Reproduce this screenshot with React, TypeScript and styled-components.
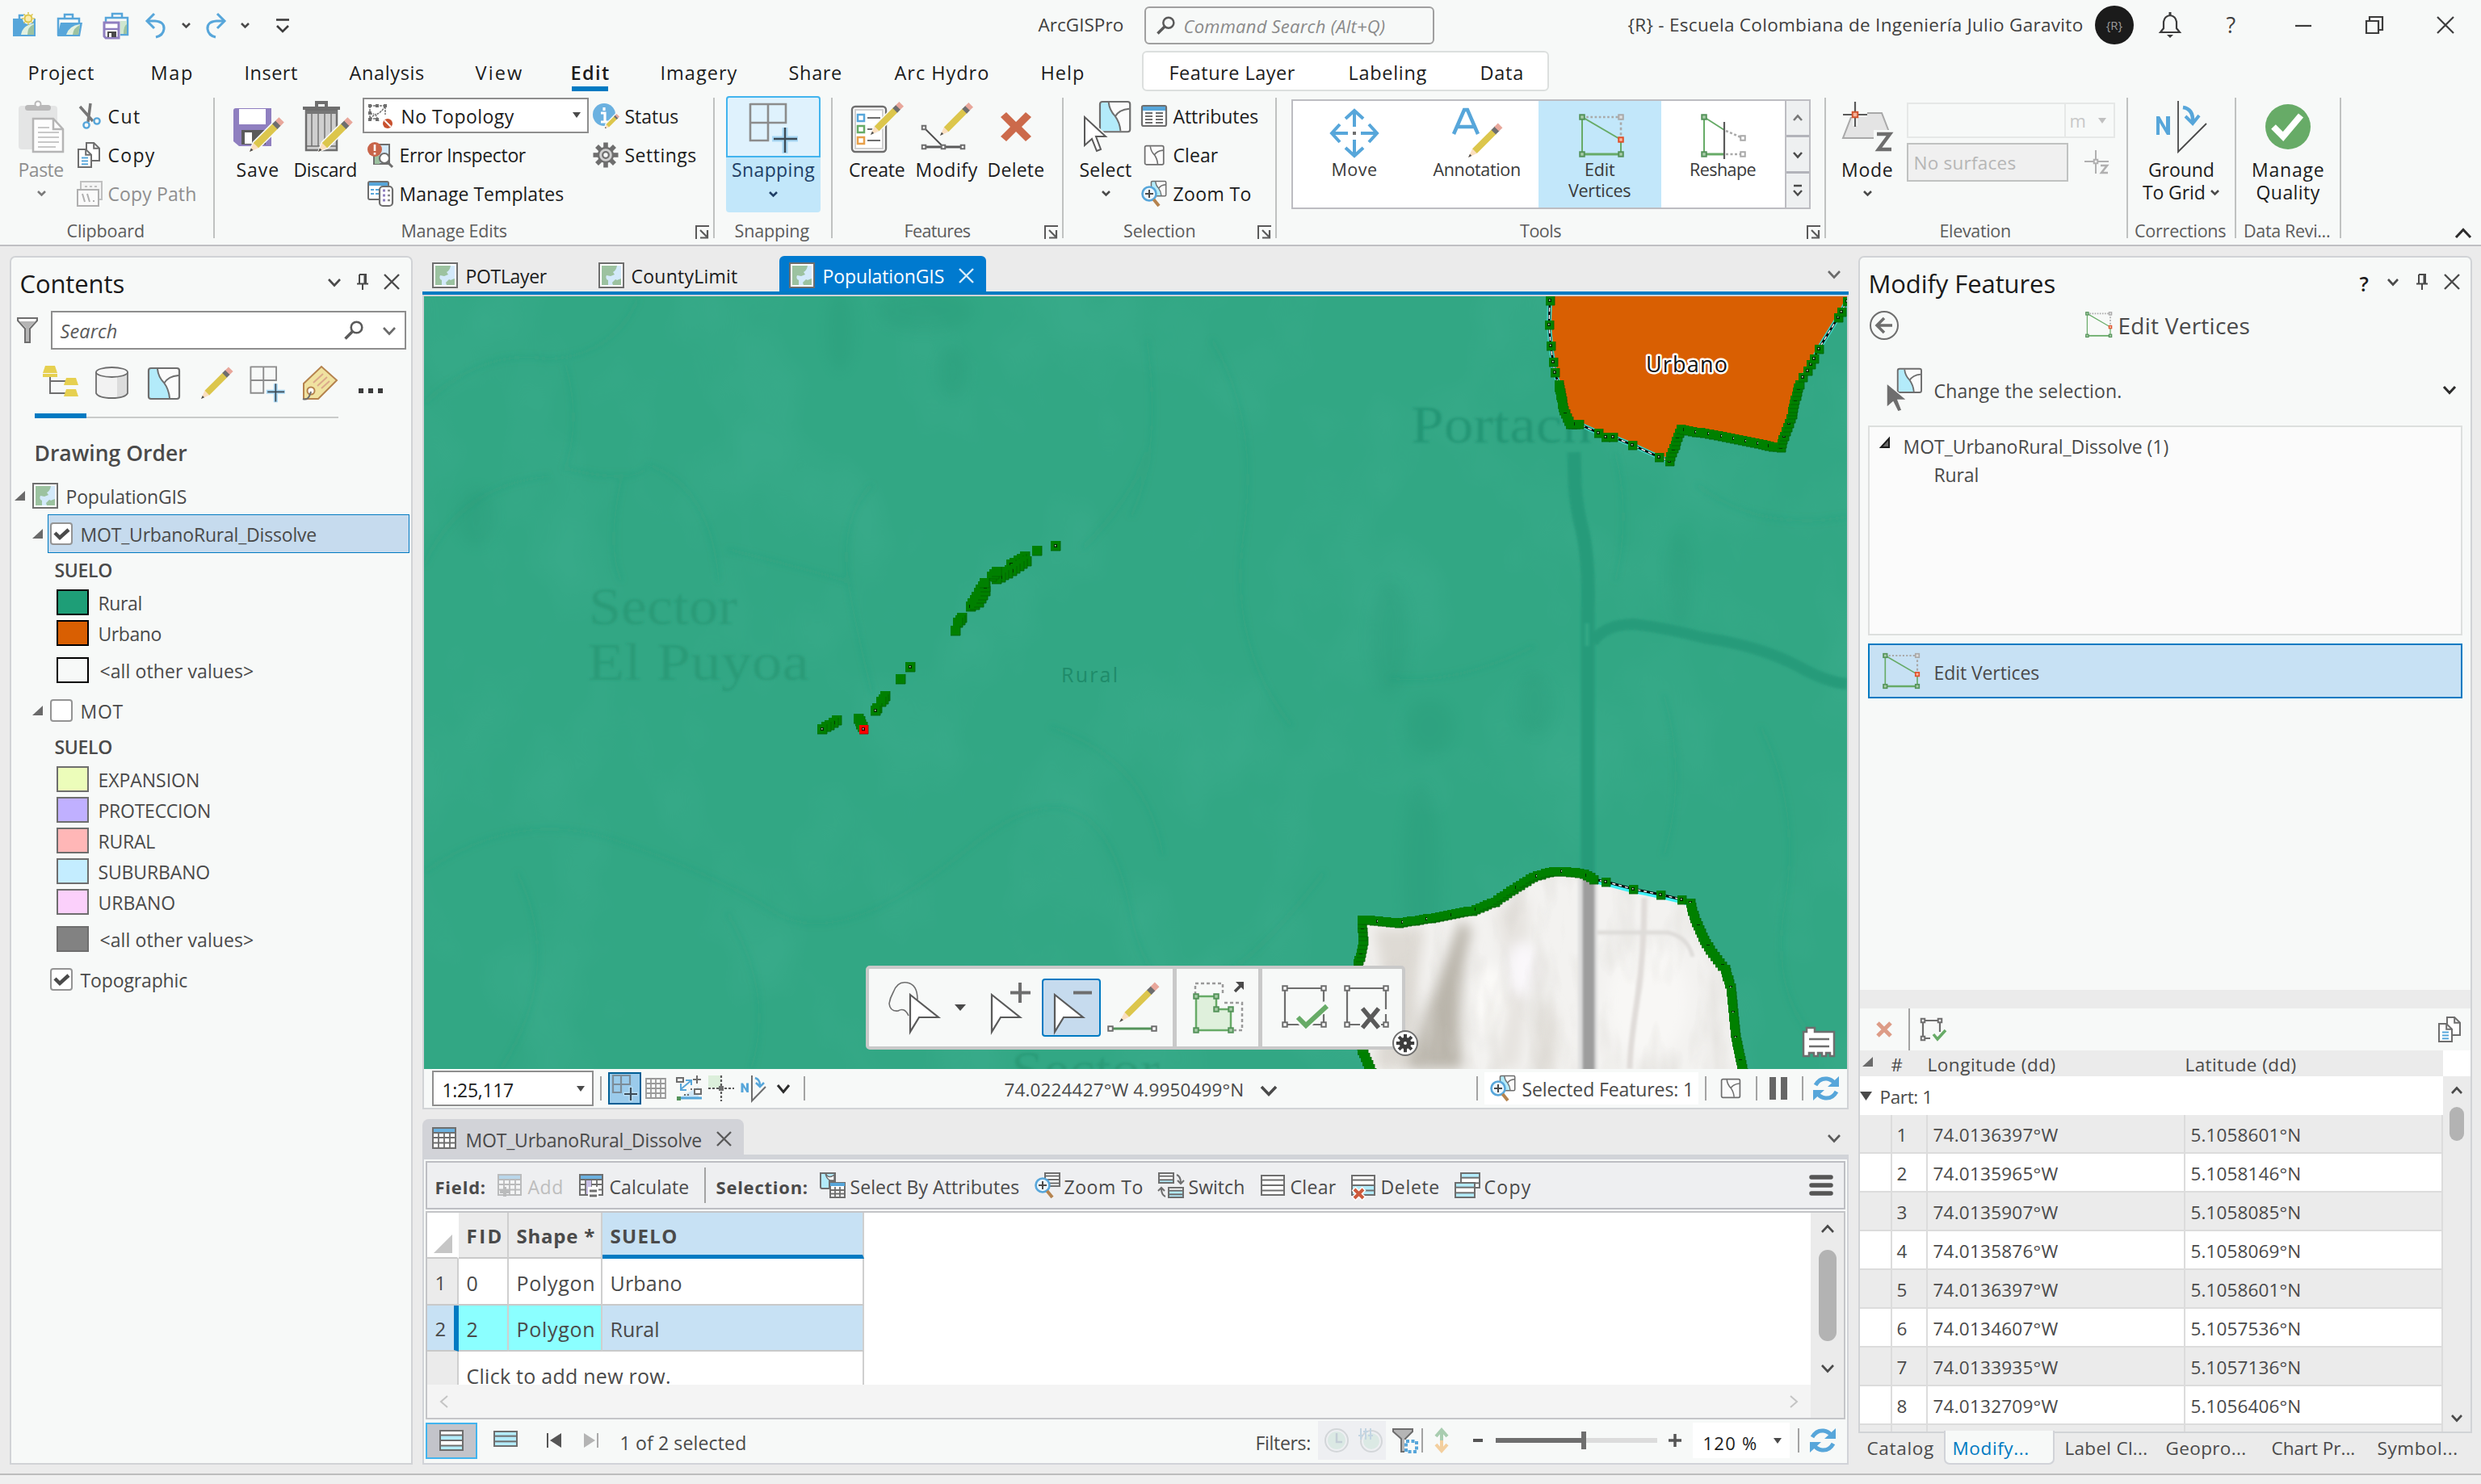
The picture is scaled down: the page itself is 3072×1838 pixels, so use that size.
import React, { useLayoutEffect, useRef, ReactNode } from "react";
import styled, { createGlobalStyle, css } from "styled-components";

const Global = createGlobalStyle`
  * { box-sizing: border-box; }
  html, body { margin: 0; padding: 0; }
  body { background: #ebebeb; overflow: hidden; }
  #root { font-family: "Open Sans", "Noto Sans", sans-serif; color: #4a4a4a; }
`;

/* ---------- text ---------- */

interface TextProps {
  $w?: number;
  $s?: number;
  $c?: string;
  $b?: number;
  $i?: boolean;
  $ml?: number;
  $lh?: number;
}

const TextBox = styled.span<TextProps>`
  display: block;
  flex: none;
  white-space: pre;
  text-indent: -1.5px;
  ${(p) => p.$w && css`width: ${p.$w}px;`}
  font-size: ${(p) => p.$s ?? 23}px;
  line-height: ${(p) => p.$lh ?? 28}px;
  color: ${(p) => p.$c ?? "inherit"};
  font-weight: ${(p) => p.$b ?? 400};
  font-style: ${(p) => (p.$i ? "italic" : "normal")};
  margin-left: ${(p) => p.$ml ?? 0}px;
`;

interface LabelProps {
  t: string;
  w?: number;
  s?: number;
  c?: string;
  b?: number;
  i?: boolean;
  ml?: number;
  lh?: number;
}

/* Text whose tracking is adjusted so that it fills its given width. */
function Label({ t, w, s, c, b, i, ml, lh }: LabelProps) {
  const ref = useRef<HTMLSpanElement>(null);
  useLayoutEffect(() => {
    const el = ref.current;
    if (!el || !w) return;
    el.style.letterSpacing = "0px";
    const range = document.createRange();
    range.selectNodeContents(el);
    const natural = range.getBoundingClientRect().width;
    const side = (s ?? 23) * 0.12;
    el.style.letterSpacing = `${(w + side - natural) / Math.max(1, t.length - 1)}px`;
  }, [t, w, s, b, i]);
  return (
    <TextBox ref={ref} $w={w} $s={s} $c={c} $b={b} $i={i} $ml={ml} $lh={lh}>
      {t}
    </TextBox>
  );
}

/* ---------- generic icon frame ---------- */

const Svg = styled.svg<{ $w: number; $h: number; $ml?: number; $mt?: number }>`
  display: block;
  flex: none;
  overflow: visible;
  width: ${(p) => p.$w}px;
  height: ${(p) => p.$h}px;
  margin-left: ${(p) => p.$ml ?? 0}px;
  margin-top: ${(p) => p.$mt ?? 0}px;
`;

interface IconProps {
  w?: number;
  h?: number;
  vb?: string;
  ml?: number;
  mt?: number;
  children?: ReactNode;
}
const Ic = ({ w = 32, h, vb, ml, mt, children }: IconProps) => (
  <Svg $w={w} $h={h ?? w} $ml={ml} $mt={mt} viewBox={vb ?? `0 0 ${w} ${h ?? w}`} fill="none">
    {children}
  </Svg>
);

const G = "#6e6e6e";
const BL = "#57a6da";

const Caret = ({ w = 11, h = 6, ml, mt, c = "#4a4a4a", sw = 2.6, dir = "down" }: any) => (
  <Ic w={w} h={h} ml={ml} mt={mt}>
    <path
      d={dir === "down" ? `M1 1L${w / 2} ${h - 0.5}L${w - 1} 1` : dir === "up" ? `M1 ${h - 1}L${w / 2} .5L${w - 1} ${h - 1}` : dir === "left" ? `M${w - 1} 1L1 ${h / 2}L${w - 1} ${h - 1}` : `M1 1L${w - 1} ${h / 2}L1 ${h - 1}`}
      stroke={c}
      strokeWidth={sw}
    />
  </Ic>
);
const Drop = ({ ml, c = "#4a4a4a", w = 10, h = 7, mt }: any) => (
  <Ic w={w} h={h} ml={ml} mt={mt}><path d={`M0 0H${w}L${w / 2} ${h}Z`} fill={c} /></Ic>
);
const Cross = ({ s = 20, ml, mt, c = "#4a4a4a", sw = 2.4 }: any) => (
  <Ic w={s} ml={ml} mt={mt}><path d={`M1 1L${s - 1} ${s - 1}M${s - 1} 1L1 ${s - 1}`} stroke={c} strokeWidth={sw} /></Ic>
);
const Pin = ({ ml }: any) => (
  <Ic w={14} h={20} ml={ml}>
    <path d="M3 1H11V12M3 1V12M0 12.5H14M7 13V20" stroke="#4a4a4a" strokeWidth="2" />
    <path d="M8.5 1H11V12H8.5Z" fill="#4a4a4a" />
  </Ic>
);
const Corner = ({ ml, mt }: any) => (
  <Ic w={13} h={12} ml={ml} mt={mt}><path d="M13 0V12H0Z" fill="#6a6a6a" /></Ic>
);

const Pencil = ({ x, y, len = 52, w = 8, a = 45, halo = true }: { x: number; y: number; len?: number; w?: number; a?: number; halo?: boolean }) => (
  <g transform={`translate(${x} ${y}) rotate(${a})`}>
    {halo && <path d={`M0 2L${-w / 2 - 1.5} ${-len * 0.2}V${-len - 1}H${w / 2 + 1.5}V${-len * 0.2}Z`} fill="#f7f9f8" />}
    <path d={`M0 0L${-w / 2} ${-len * 0.2}H${w / 2}Z`} fill="#fadfc0" />
    <path d={`M0 0L${-w / 5} ${-len * 0.08}H${w / 5}Z`} fill="#4a4a4a" />
    <rect x={-w / 2} y={-len * 0.8} width={w} height={len * 0.6} fill="#dcc64c" />
    <rect x={-w / 2} y={-len * 0.9} width={w} height={len * 0.11} fill={G} />
    <path d={`M${-w / 2} ${-len * 0.89}V${-len}H${w / 2}V${-len * 0.89}Z`} fill="#e8a79b" />
  </g>
);

const Node = ({ x, y, c = G, s = 6, f = "#fff" }: any) => (
  <rect x={x - s / 2 + 0.75} y={y - s / 2 + 0.75} width={s - 1.5} height={s - 1.5} stroke={c} strokeWidth="2" fill={f} />
);

const VerticesShape = () => (
  <g>
    <path d="M4 4H52" stroke="#a9a9a9" strokeWidth="2.6" strokeDasharray="2.6 2.6" />
    <path d="M52 4V32" stroke="#a9a9a9" strokeWidth="2.6" strokeDasharray="3.4 3" />
    <path d="M4 50V4L52 32V50" stroke="#67ab67" strokeWidth="2" />
    <path d="M4 50H52" stroke="#67ab67" strokeWidth="3" />
    <Node x={4} y={4} c="#54935a" s={7} f="#a9cda9" />
    <Node x={4} y={50} c="#54935a" s={7} f="#a9cda9" />
    <Node x={52} y={50} c="#54935a" s={7} f="#a9cda9" />
    <Node x={52} y={4} c="#a9a9a9" s={7} f="#ddd" />
    <Node x={52} y={32} c="#e0502a" s={7} f="#f8b8a0" />
  </g>
);

const MapPiece = ({ x = 0, y = 0, s = 1, blue = true }: any) => (
  <g transform={`translate(${x} ${y}) scale(${s})`}>
    <rect x="1" y="1" width="38" height="38" rx="3" fill="#fbfbfb" />
    {blue && <path d="M3 2H12Q13 12 20 19Q26 27 27 38H3Q2 38 2 36V3Z" fill="#b3ebfa" />}
    <path d="M12 2Q13 12 20 19Q26 27 27 38M20 20Q25 11 38 10" stroke={G} strokeWidth={2 / Math.sqrt(s)} />
    <rect x="1" y="1" width="38" height="38" rx="3" stroke={G} strokeWidth={2.2 / Math.sqrt(s)} />
  </g>
);

const PageLines = ({ x, y, w, h, c = G, lc = "#57a6da" }: any) => (
  <g transform={`translate(${x} ${y})`}>
    <path d={`M1 1H${w * 0.6}L${w} ${w * 0.45}V${h}H1Z`} fill="#fff" stroke={c} strokeWidth="2" />
    <path d={`M${w * 0.6} 1V${w * 0.45}H${w}`} stroke={c} strokeWidth="2" />
    {[0.5, 0.67, 0.84].map((k) => <path key={k} d={`M5 ${h * k}H${w - 4}`} stroke={lc} strokeWidth="2" />)}
  </g>
);

const CopyIcon = ({ w = 32, ml }: any) => (
  <Ic w={w} ml={ml} vb="0 0 32 32">
    <PageLines x={11} y={0} w={17} h={23} lc="none" />
    <PageLines x={1} y={8} w={17} h={23} />
  </Ic>
);

const SnapShape = () => (
  <g>
    <path d="M2 2H46V25H2M24 2V47H2V1" stroke="#8c8c8c" strokeWidth="2.6" />
    <path d="M45 31V63M29 45H61" stroke="#a9d8f5" strokeWidth="7" />
    <path d="M45 31V62M31 45H60" stroke="#3c4a55" strokeWidth="2.4" />
  </g>
);

const MapThumb = ({ ml }: any) => (
  <Ic w={32} ml={ml}>
    <rect x="1" y="1" width="30" height="30" fill="#fff" stroke="#6e6e6e" strokeWidth="2" />
    <rect x="4" y="4" width="24" height="24" fill="#9cc2a0" />
    <path d="M28 4H23Q22 10 18 12L20 15L15 17L10 16Q8 20 12 22V28H18Q20 22 28 20Z" fill="#d3e9fa" />
    <path d="M18 28L17 25L21 21L28 24V28Z" fill="#9cc2a0" />
  </Ic>
);

const ZoomMap = ({ ml }: any) => (
  <Ic w={32} ml={ml}>
    <MapPiece x={12} y={0} s={0.48} />
    <circle cx="10" cy="16" r="8.5" fill="#eef7fd" stroke={BL} strokeWidth="2.6" />
    <path d="M10 11V21M5 16H15" stroke="#4a4a4a" strokeWidth="2" />
    <path d="M15.500 23L22 31" stroke="#b5834e" strokeWidth="4" />
  </Ic>
);

const Sheet = ({ x, y, w, h, rows = 4, blue = [] as number[] }: any) => (
  <g transform={`translate(${x} ${y})`}>
    <rect x="1" y="1" width={w - 2} height={h - 2} fill="#fff" />
    {blue.map((b: number) => <rect key={b} x="1" y={(h * b) / rows} width={w - 2} height={h / rows} fill="#b3ebfa" />)}
    {Array.from({ length: rows - 1 }, (_, k) => <path key={k} d={`M1 ${(h * (k + 1)) / rows}H${w - 1}`} stroke={G} strokeWidth="2" />)}
    <rect x="1" y="1" width={w - 2} height={h - 2} stroke={G} strokeWidth="2" />
  </g>
);

const GridTable = ({ ml, children, o = 1 }: any) => (
  <Ic w={30} h={32} ml={ml}>
    <g opacity={o}>
      <rect x="1" y="3" width="28" height="25" fill="#fff" />
      <rect x="1" y="3" width="28" height="6" fill="#6bb1e0" />
      <path d="M1 9H29M1 15H29M1 21.5H29M8 9V28M15 9V28M22 9V28" stroke={G} strokeWidth="1.8" />
      <rect x="1" y="3" width="28" height="25" stroke={G} strokeWidth="2" />
      {children}
    </g>
  </Ic>
);

const Refresh = ({ ml }: any) => (
  <Ic w={32} ml={ml}>
    <path d="M3 12Q8 3 17 4Q23 5 26 9" stroke={BL} strokeWidth="5" />
    <path d="M32 1V14H18Z" fill={BL} />
    <path d="M29 20Q24 29 15 28Q9 27 6 23" stroke={BL} strokeWidth="5" />
    <path d="M0 31V18H14Z" fill={BL} />
  </Ic>
);

const GearShape = ({ c = G, f = "#d0d0d0", r = 11 }: any) => (
  <g transform="translate(16 16)">
    {[0, 45, 90, 135, 180, 225, 270, 315].map((a) => (
      <rect key={a} x="-2.800" y={-r - 4.500} width="5.600" height="7" transform={`rotate(${a})`} fill={c} />
    ))}
    <circle r={r - 2} fill={f} stroke={c} strokeWidth="2.4" />
    <circle r="3.800" fill="#f7f9f8" stroke={c} strokeWidth="2.200" />
  </g>
);

const GroundShape = () => (
  <g>
    <path d="M10 42V19H14L22 33V19H27V42H23L14 27V42Z" transform="translate(-9 0)" fill={BL} />
    <path d="M28 0V63L63 28" stroke="#4a4a4a" strokeWidth="1.800" />
    <path d="M34 8Q47 10 46 26" stroke={BL} strokeWidth="4.500" />
    <path d="M37 19L46 28L54 18" stroke={BL} strokeWidth="4" />
  </g>
);

const Lens = ({ ml, w = 24 }: any) => (
  <Ic w={w} ml={ml} vb="0 0 24 24">
    <circle cx="15.500" cy="8.500" r="6.800" stroke="#5a5a5a" strokeWidth="2.600" />
    <path d="M10.500 13.500L1.500 22.500" stroke="#5a5a5a" strokeWidth="3.600" />
  </Ic>
);

/* ---------- window and title bar ---------- */

const Window = styled.div`
  width: 3072px;
  height: 1838px;
  display: flex;
  flex-direction: column;
  background: #f7f9f8;
  overflow: hidden;
`;

const TitleBar = styled.header`
  height: 62px;
  flex: none;
  display: flex;
  align-items: center;
  padding-left: 14px;
  color: #3f3f3f;
`;

const SearchCommand = styled.div`
  margin-left: 27px;
  width: 359px;
  height: 47px;
  border: 2px solid #a0a0a0;
  border-radius: 6px;
  display: flex;
  align-items: center;
  padding-left: 13px;
  > span { padding-top: 2px; }
`;

const Avatar = styled.div`
  margin-left: 16px;
  width: 48px;
  height: 48px;
  border-radius: 50%;
  background: #1b1b1b;
  color: #9a9a9a;
  font-size: 15px;
  display: flex;
  align-items: center;
  justify-content: center;
`;

function Title() {
  return (
    <TitleBar>
      <Ic w={32}>
        <path d="M10 8V4H22V8" stroke={BL} strokeWidth="2.500" /><rect x="2" y="8" width="28" height="22" fill={BL} />
        <path d="M12 28Q14 16 28 14V28Z" fill="#e3f1e0" /><path d="M20 28Q20 18 28 15V28Z" fill="#9cc2a0" />
        <circle cx="21" cy="8" r="7" fill="#f7f9f8" /><circle cx="21" cy="8" r="4.500" fill="#fbedb0" stroke="#dcc64c" strokeWidth="2" />
        <path d="M21 0V16M13 8H29M15.500 2.500L26.500 13.500M26.500 2.500L15.500 13.500" stroke="#dcc64c" strokeWidth="1.500" strokeDasharray="2.500 11" />
      </Ic>
      <Ic w={32} ml={24}>
        <path d="M10 8V3H20V8" stroke={BL} strokeWidth="2.500" /><path d="M2 29V8H28V14" stroke={BL} strokeWidth="2.500" />
        <path d="M5 13H32L29 30H1Z" fill={BL} /><path d="M12 28Q15 17 29 15L27 28Z" fill="#e3f1e0" /><path d="M20 28Q21 19 29 16L27 28Z" fill="#9cc2a0" />
      </Ic>
      <Ic w={34} h={34} ml={25}>
        <path d="M12 8V3H24V8M4 14V8H31V29H22" stroke={BL} strokeWidth="2.500" /><path d="M22 12H30V28H22Z" fill="#cfe6cf" /><path d="M26 28Q26 18 30 16V28Z" fill="#9cc2a0" />
        <path d="M2 14H20V33H4L2 31Z" fill="#fff" stroke="#8f7fc0" strokeWidth="3" /><path d="M2 22H20" stroke="#8f7fc0" strokeWidth="2.500" /><path d="M6 25H17V32H6Z" fill="#4a4a4a" /><path d="M8 27H11V32H8Z" fill="#fff" />
      </Ic>
      <Ic w={30} ml={17}>
        <path d="M4 10H14Q26 11 25 20Q24 28 15 30" stroke={BL} strokeWidth="3" /><path d="M13 1L4 10L13 19" stroke={BL} strokeWidth="3" />
      </Ic>
      <Caret ml={17} />
      <Ic w={30} ml={16}>
        <path d="M26 10H16Q4 11 5 20Q6 28 15 30" stroke={BL} strokeWidth="3" /><path d="M17 1L26 10L17 19" stroke={BL} strokeWidth="3" />
      </Ic>
      <Caret ml={16} />
      <Ic w={16} h={18} ml={33} mt={2}><path d="M0 1.500H16" stroke="#3c3c3c" strokeWidth="2.600" /><path d="M1 9L8 16L15 9" stroke="#3c3c3c" strokeWidth="2.600" /></Ic>
      <Label t="ArcGISPro" w={103} s={22.5} ml={929} lh={36} />
      <SearchCommand>
        <Lens w={23} />
        <Label t="Command Search (Alt+Q)" w={247} s={22} ml={12} i c="#8a8a8a" />
      </SearchCommand>
      <Label t="{R} - Escuela Colombiana de Ingeniería Julio Garavito" w={561} s={22.5} ml={241} lh={36} />
      <Avatar>{"{R}"}</Avatar>
      <Ic w={28} h={32} ml={31}>
        <path d="M2 25H26L22 20V12Q21 5 14 4Q7 5 6 12V20Z" stroke="#3c3c3c" strokeWidth="2.200" /><path d="M14 0V4" stroke="#3c3c3c" strokeWidth="3" /><path d="M10 28H18L14 32Z" fill="#3c3c3c" />
      </Ic>
      <Label t="?" s={27} w={12} ml={57} lh={32} />
      <Ic w={20} h={20} ml={72}><path d="M0 11H20" stroke="#3c3c3c" strokeWidth="2.200" /></Ic>
      <Ic w={22} h={22} ml={67}><path d="M1 6H16V21H1ZM5 6V1H21V17H16" stroke="#3c3c3c" strokeWidth="2.200" /></Ic>
      <Cross s={22} ml={66} c="#3c3c3c" sw={2.200} />
    </TitleBar>
  );
}

/* ---------- ribbon tabs ---------- */

const TabStrip = styled.nav`
  height: 52px;
  flex: none;
  display: flex;
  padding-left: 36px;
  color: #1c1c1c;
`;
const RibbonTab = styled.div<{ $ml: number; $on?: boolean }>`
  height: 51px;
  margin-left: ${(p) => p.$ml}px;
  border-bottom: 6px solid ${(p) => (p.$on ? "#007ac2" : "transparent")};
`;
const ContextTabs = styled.div`
  margin-left: 73px;
  margin-top: 1px;
  width: 504px;
  height: 50px;
  background: #fff;
  border: 2px solid #dcdfde;
  border-radius: 6px;
  display: flex;
  padding-left: 33px;
  > span { margin-top: -3px; }
`;

function Tabs() {
  const tabs: [string, number, number][] = [
    ["Project", 0, 79], ["Map", 73, 49], ["Insert", 67, 63], ["Analysis", 67, 90], ["View", 66, 55], ["Edit", 63, 45],
    ["Imagery", 66, 92], ["Share", 67, 63], ["Arc Hydro", 68, 114], ["Help", 67, 51],
  ];
  return (
    <TabStrip>
      {tabs.map(([t, ml, w]) => (
        <RibbonTab key={t} $ml={ml} $on={t === "Edit"}>
          <Label t={t} w={w} s={23.5} lh={56} b={t === "Edit" ? 600 : 400} />
        </RibbonTab>
      ))}
      <ContextTabs>
        <Label t="Feature Layer" w={153} s={23.5} lh={56} />
        <Label t="Labeling" w={94} s={23.5} lh={56} ml={69} />
        <Label t="Data" w={51} s={23.5} lh={56} ml={69} />
      </ContextTabs>
    </TabStrip>
  );
}

/* ---------- ribbon ---------- */

const RibbonBar = styled.div`
  height: 191px;
  flex: none;
  display: flex;
  padding-top: 7px;
  border-bottom: 2px solid #bfbfc3;
`;
const GroupBox = styled.section<{ $w: number }>`
  width: ${(p) => p.$w}px;
  height: 174px;
  flex: none;
  border-right: 2px solid #c0c2c1;
  display: flex;
  flex-direction: column;
  color: #1c1c1c;
`;
const GroupBody = styled.div<{ $pl: number }>`
  height: 150px;
  display: flex;
  align-items: flex-start;
  padding-left: ${(p) => p.$pl}px;
`;
const GroupFoot = styled.div`
  height: 24px;
  display: flex;
  color: #5c5c5c;
`;
const FootLabel = styled.div`
  flex: 1;
  display: flex;
  justify-content: center;
  padding-right: 2px;
`;
const LaunchPad = styled.i`
  width: 5px;
  flex: none;
`;

const Group = ({ w, pl, name, nw, launch, children }: any) => (
  <GroupBox $w={w}>
    <GroupBody $pl={pl}>{children}</GroupBody>
    <GroupFoot>
      <FootLabel><Label t={name} w={nw} s={21.5} lh={30} /></FootLabel>
      {launch && (
        <Ic w={17} h={17} mt={8} vb="0 0 17 17">
          <path d="M1 17V1H17" stroke="#5a5a5a" strokeWidth="2" /><path d="M6 6L14 14M15 6V15.500H6" stroke="#5a5a5a" strokeWidth="2.200" />
        </Ic>
      )}
      {launch && <LaunchPad />}
    </GroupFoot>
  </GroupBox>
);

const BigButton = styled.div<{ $w: number; $off?: boolean; $ml?: number }>`
  width: ${(p) => p.$w}px;
  margin-left: ${(p) => p.$ml ?? 0}px;
  padding-top: 4px;
  display: flex;
  flex: none;
  flex-direction: column;
  align-items: center;
  color: ${(p) => (p.$off ? "#8f8f8f" : "#1c1c1c")};
`;
const BigText = styled.div`
  margin-top: 7px;
  display: flex;
  flex-direction: column;
  align-items: center;
`;
const TextLine = styled.div`
  display: flex;
  align-items: center;
`;

const SmallCol = styled.div<{ $ml: number }>`
  margin-left: ${(p) => p.$ml}px;
  display: flex;
  flex: none;
  flex-direction: column;
`;
const SmallButton = styled.div<{ $gap?: number; $pl?: number; $off?: boolean }>`
  height: 48px;
  display: flex;
  align-items: center;
  padding-left: ${(p) => p.$pl ?? 0}px;
  gap: ${(p) => p.$gap ?? 8}px;
  color: ${(p) => (p.$off ? "#8f8f8f" : "inherit")};
  > svg { margin-top: -3px; }
  > span { margin-top: -2px; }
`;
const TopologyCombo = styled.div`
  width: 280px;
  height: 44px;
  margin-bottom: 4px;
  background: #fff;
  border: 2px solid #8e8e8e;
  display: flex;
  align-items: center;
  padding-top: 2px;
  padding-left: 4px;
`;
const SnapToggle = styled.div`
  margin-top: -2px;
  width: 117px;
  height: 144px;
  border-radius: 4px;
  background: #c2e7fa;
  display: flex;
  flex-direction: column;
  align-items: center;
  color: #1f3f66;
`;
const SnapTop = styled.div`
  width: 117px;
  height: 76px;
  border: 2px solid #42b4ee;
  border-radius: 4px 4px 0 0;
  background: #dff2fd;
  display: flex;
  justify-content: center;
  padding-top: 6px;
`;
const Gallery = styled.div`
  margin-top: 2px;
  width: 643px;
  height: 136px;
  background: #fff;
  border: 2px solid #bdbdc2;
  display: flex;
`;
const GalleryCell = styled.div<{ $w: number; $on?: boolean }>`
  width: ${(p) => p.$w}px;
  height: 132px;
  background: ${(p) => (p.$on ? "#c2e7fa" : "transparent")};
  display: flex;
  flex-direction: column;
  align-items: center;
  padding-top: 8px;
  color: #3a3a3a;
`;
const GallerySteps = styled.div`
  width: 30px;
  height: 132px;
  border-left: 2px solid #bdbdc2;
  background: #eef0f1;
  display: flex;
  flex-direction: column;
`;
const GalleryStep = styled.div`
  flex: 1;
  display: flex;
  align-items: center;
  justify-content: center;
  & + & { border-top: 3px solid #b2b3ba; }
`;
const ElevationCol = styled.div`
  margin-left: 16px;
  margin-top: 6px;
  width: 258px;
`;
const HeightInput = styled.div`
  width: 258px;
  height: 44px;
  border: 2px solid #e6e8e7;
  display: flex;
`;
const UnitBox = styled.div`
  margin-left: 193px;
  width: 61px;
  border-left: 2px solid #e6e8e7;
  display: flex;
  align-items: center;
  padding-left: 6px;
`;
const SurfaceRow = styled.div`
  margin-top: 6px;
  display: flex;
  align-items: center;
`;
const SurfaceBox = styled.div`
  width: 200px;
  height: 48px;
  border: 2px solid #c0c2c1;
  background: #f0f0f0;
  padding: 9px 0 0 8px;
`;
const CollapseArea = styled.div`
  flex: 1;
  display: flex;
  align-items: flex-end;
  justify-content: flex-end;
  padding: 0 12px 8px 0;
`;

function Ribbon() {
  return (
    <RibbonBar>
      <Group w={266} pl={15} name="Clipboard" nw={94}>
        <BigButton $w={72} $off>
          <Ic w={64}>
            <rect x="4" y="6" width="48" height="54" rx="4" fill="#e4e5e5" /><rect x="12" y="5" width="32" height="7" rx="3.500" fill="#b9b9b9" /><circle cx="28" cy="4" r="3.500" fill="#fff" stroke="#b9b9b9" strokeWidth="2" />
            <path d="M22 22H47L59 35V63H22Z" fill="#fdfdfd" stroke="#b5b5b5" strokeWidth="2.500" /><path d="M47 22V35H59" stroke="#b5b5b5" strokeWidth="2.500" />
            <path d="M28 33H42M28 39H54M28 45H54M28 51H54M28 57H50" stroke="#c8c8c8" strokeWidth="2" />
          </Ic>
          <BigText><Label t="Paste" w={54} /></BigText>
          <Caret mt={12} c="#7a7a7a" />
        </BigButton>
        <SmallCol $ml={8}>
          <SmallButton>
            <Ic w={32}>
              <path d="M4 4L20 22M17 0L14 23" stroke="#777" strokeWidth="3.500" /><circle cx="12" cy="27" r="3.600" stroke={BL} strokeWidth="2.400" /><circle cx="25" cy="22" r="3.600" stroke={BL} strokeWidth="2.400" />
            </Ic>
            <Label t="Cut" w={37} />
          </SmallButton>
          <SmallButton><CopyIcon /><Label t="Copy" w={55} /></SmallButton>
          <SmallButton $off>
            <Ic w={32}>
              <rect x="5" y="1" width="26" height="22" fill="#f4f4f4" stroke="#c0c0c0" strokeWidth="2" /><path d="M10 7H26" stroke="#c0c0c0" strokeWidth="2" strokeDasharray="3 3" />
              <rect x="1" y="11" width="26" height="20" fill="#fafafa" stroke="#b0b0b0" strokeWidth="2" /><path d="M7 16L10 26M13 16L16 26M20 25H22" stroke="#b0b0b0" strokeWidth="2" />
            </Ic>
            <Label t="Copy Path" w={107} />
          </SmallButton>
        </SmallCol>
      </Group>

      <Group w={619} pl={17} name="Manage Edits" nw={129} launch>
        <BigButton $w={72}>
          <Ic w={64}>
            <path d="M2 12Q2 9 5 9H49V56H9L2 50Z" fill="#8f7fc0" /><rect x="9" y="10" width="33" height="19" fill="#fff" /><path d="M12 36H42V54H12Z" fill="#5a5a5a" /><rect x="16" y="39" width="9" height="14" fill="#fff" />
            <Pencil x={22} y={63} len={56} w={9} />
          </Ic>
          <BigText><Label t="Save" w={50} /></BigText>
        </BigButton>
        <BigButton $w={92} $ml={2}>
          <Ic w={64}>
            <path d="M21 7V2H33V7" stroke={G} strokeWidth="4" /><rect x="4" y="7" width="46" height="4" fill={G} />
            <rect x="8" y="12" width="38" height="49" fill="#cfcfcf" stroke={G} strokeWidth="2.500" /><rect x="8" y="12" width="38" height="4" fill="#777" />
            <path d="M15 16V56M23 16V56M31 16V56M39 16V56" stroke="#8a8a8a" strokeWidth="2" /><path d="M8 56H46" stroke={G} strokeWidth="1.500" />
            <Pencil x={23} y={63} len={56} w={9} />
          </Ic>
          <BigText><Label t="Discard" w={76} /></BigText>
        </BigButton>
        <SmallCol $ml={0}>
          <TopologyCombo>
            <Ic w={32}>
              <path d="M3 3H22V14M3 3V19L10 13M3 19H12M22 3Q17 12 10 14L14 22M3 13H8" stroke={G} strokeWidth="1.500" strokeDasharray="3 1" />
              {[[3, 3], [12, 3], [22, 3], [3, 12], [3, 20], [12, 20]].map(([x, y]) => <rect key={`${x}-${y}`} x={x - 2} y={y - 2} width="4" height="4" fill={G} />)}
              <circle cx="25" cy="25" r="6" fill="#c8502e" /><path d="M21 21L29 29" stroke="#fff" strokeWidth="2" />
            </Ic>
            <Label t="No Topology" w={137} ml={11} />
            <Drop ml={74} mt={-3} />
          </TopologyCombo>
          <SmallButton $pl={6} $gap={9}>
            <Ic w={32}>
              <rect x="8" y="3" width="19" height="24" fill="#d3e9fa" stroke={G} strokeWidth="2" /><path d="M9 27V14L17 18L15 27Z" fill="#9cc2a0" />
              <circle cx="9" cy="9" r="9" fill="#c8654a" /><path d="M9 3V11M9 13V15.500" stroke="#fff" strokeWidth="2.600" />
              <circle cx="21" cy="20" r="6" fill="#fff" stroke={G} strokeWidth="2.200" /><path d="M25 25L31 31" stroke={G} strokeWidth="3" />
            </Ic>
            <Label t="Error Inspector" w={154} />
          </SmallButton>
          <SmallButton $pl={6} $gap={9}>
            <Ic w={32}>
              <rect x="1" y="1" width="25" height="22" rx="2" fill="#fff" stroke={G} strokeWidth="2" /><rect x="2" y="2" width="23" height="4" fill="#57a6da" />
              <path d="M4 11H8M10 11H14M4 16H8M10 16H14" stroke={BL} strokeWidth="2" />
              <rect x="15" y="7" width="16" height="24" rx="4" fill="#fff" stroke={G} strokeWidth="2.200" /><path d="M19 12H22M19 18H22M19 24H22" stroke="#8f7fc0" strokeWidth="3" /><path d="M25 12H28M25 18H28M25 24H28" stroke="#8a8a8a" strokeWidth="2.500" />
            </Ic>
            <Label t="Manage Templates" w={201} />
          </SmallButton>
        </SmallCol>
        <SmallCol $ml={5}>
          <SmallButton $gap={9}>
            <Ic w={32}>
              <circle cx="14" cy="14" r="14" fill="#6bb1e0" /><path d="M14 5V9M10 12H15V23M10 23H19" stroke="#fff" strokeWidth="3.200" />
              <Pencil x={15} y={31} len={23} w={5} />
            </Ic>
            <Label t="Status" w={64} />
          </SmallButton>
          <SmallButton $gap={9}>
            <Ic w={32}><GearShape /></Ic>
            <Label t="Settings" w={86} />
          </SmallButton>
        </SmallCol>
      </Group>

      <Group w={146} pl={14} name="Snapping" nw={90}>
        <SnapToggle>
          <SnapTop><Ic w={64} ml={2}><SnapShape /></Ic></SnapTop>
          <TextLine><Label t="Snapping" w={100} lh={30} /></TextLine>
          <Caret mt={12} c="#1f3f66" />
        </SnapToggle>
      </Group>

      <Group w={286} pl={18} name="Features" nw={80} launch>
        <BigButton $w={74}>
          <Ic w={64}>
            <rect x="1" y="7" width="42" height="56" rx="4" fill="#fff" stroke={G} strokeWidth="2.400" /><rect x="5" y="11" width="34" height="48" fill="none" stroke="#cfcfcf" strokeWidth="2" />
            <rect x="8" y="17" width="8" height="8" stroke={BL} strokeWidth="2.500" /><rect x="8" y="31" width="8" height="8" stroke="#67ab67" strokeWidth="2.500" /><rect x="8" y="45" width="8" height="8" stroke="#e8a04a" strokeWidth="2.500" />
            <path d="M20 21H36M20 35H36M20 49H36" stroke={G} strokeWidth="2" /><Pencil x={24} y={42} len={54} w={8} />
          </Ic>
          <BigText><Label t="Create" w={67} /></BigText>
        </BigButton>
        <BigButton $w={84} $ml={7}>
          <Ic w={64}>
            <path d="M4 33L28 57" stroke="#4a4a4a" strokeWidth="1.800" /><path d="M4 57H52" stroke="#5a5a5a" strokeWidth="3" />
            <Node x={4} y={33} /><Node x={4} y={57} /><Node x={28} y={57} /><Node x={52} y={57} /><Pencil x={24} y={43} len={54} w={8} />
          </Ic>
          <BigText><Label t="Modify" w={74} /></BigText>
        </BigButton>
        <BigButton $w={76} $ml={6}>
          <Ic w={64}><path d="M13 20L20 14L32 26L44 14L51 20L39 32L51 44L44 50L32 38L20 50L13 44L25 32Z" fill="#cc6a4b" /></Ic>
          <BigText><Label t="Delete" w={68} /></BigText>
        </BigButton>
      </Group>

      <Group w={264} pl={19} name="Selection" nw={87} launch>
        <BigButton $w={66}>
          <Ic w={64}>
            <MapPiece x={24} y={0} s={0.98} />
            <path d="M6 20V55L15 47L21 62L26 60L20 44H32Z" fill="#fff" stroke="#f7f9f8" strokeWidth="5" />
            <path d="M6 20V55L15 47L21 62L26 60L20 44H32Z" fill="#fff" stroke="#5a5a5a" strokeWidth="2" />
          </Ic>
          <BigText><Label t="Select" w={62} /></BigText>
          <Caret mt={12} />
        </BigButton>
        <SmallCol $ml={11}>
          <SmallButton $gap={9}>
            <Ic w={32}>
              <rect x="1" y="3" width="30" height="25" rx="2" fill="#fff" stroke={G} strokeWidth="2.200" /><rect x="2" y="4" width="28" height="5" fill="#57a6da" />
              <path d="M5 12H14M5 16H14M5 20H14M5 24H14M18 12H27M18 16H27M18 20H27M18 24H27" stroke={G} strokeWidth="2" />
            </Ic>
            <Label t="Attributes" w={103} />
          </SmallButton>
          <SmallButton $gap={9}><Ic w={32}><MapPiece x={4} y={4} s={0.61} blue={false} /></Ic><Label t="Clear" w={53} /></SmallButton>
          <SmallButton $gap={9}><ZoomMap /><Label t="Zoom To" w={94} /></SmallButton>
        </SmallCol>
      </Group>

      <Group w={680} pl={18} name="Tools" nw={49} launch>
        <Gallery>
          <GalleryCell $w={152}>
            <Ic w={64}>
              {[0, 90, 180, 270].map((a) => (
                <g key={a} transform={`rotate(${a} 32 32)`}><path d="M32 24V5" stroke={BL} strokeWidth="4" /><path d="M21 14L32 4L43 14" stroke={BL} strokeWidth="4" /></g>
              ))}
              <rect x="30" y="30" width="4" height="4" fill={G} />
            </Ic>
            <Label t="Move" w={54} s={21.5} lh={26} />
          </GalleryCell>
          <GalleryCell $w={152}>
            <Ic w={64}>
              <path d="M3 33L16 3H20L33 33M8 24H28" stroke={BL} strokeWidth="4.500" /><Pencil x={21} y={62} len={56} w={8} halo={false} />
            </Ic>
            <Label t="Annotation" w={106} s={21.5} lh={26} />
          </GalleryCell>
          <GalleryCell $w={152} $on>
            <Ic w={64} h={64} vb="-6 -8 64 64"><VerticesShape /></Ic>
            <Label t="Edit" w={35} s={21.5} lh={26} />
            <Label t="Vertices" w={75} s={21.5} lh={26} />
          </GalleryCell>
          <GalleryCell $w={153}>
            <Ic w={64} h={64} vb="-4 -8 64 64">
              <path d="M4 50V4L29 20" stroke="#67ab67" strokeWidth="2" /><path d="M4 50H29" stroke="#67ab67" strokeWidth="3" />
              <path d="M29 10V56" stroke="#5a5a5a" strokeWidth="2.200" /><path d="M31 21L52 30M31 50H52" stroke="#a9a9a9" strokeWidth="2.600" strokeDasharray="3 2.500" />
              <Node x={4} y={4} c="#54935a" s={7} f="#a9cda9" /><Node x={4} y={50} c="#54935a" s={7} f="#a9cda9" /><Node x={52} y={30} c="#a9a9a9" s={7} /><Node x={52} y={50} c="#a9a9a9" s={7} />
            </Ic>
            <Label t="Reshape" w={80} s={21.5} lh={26} />
          </GalleryCell>
          <GallerySteps>
            <GalleryStep><Caret dir="up" w={12} h={7} c="#777" /></GalleryStep>
            <GalleryStep><Caret w={12} h={7} /></GalleryStep>
            <GalleryStep><Ic w={12} h={14}><path d="M1 1H11M1 7L6 12.500L11 7" stroke="#4a4a4a" strokeWidth="2.400" /></Ic></GalleryStep>
          </GallerySteps>
        </Gallery>
      </Group>

      <Group w={374} pl={18} name="Elevation" nw={86}>
        <BigButton $w={66}>
          <Ic w={64}>
            <path d="M14 15H50L62 46H2Z" fill="#e4e4e4" stroke="#a9a9a9" strokeWidth="2" />
            <path d="M17 2V31M2 17H32" stroke="#f7f9f8" strokeWidth="6" /><path d="M17 1V32M2 17H32" stroke="#5a5a5a" strokeWidth="2.200" /><Node x={17} y={17} c="#d0552f" s={8} f="#f5b59c" />
            <path d="M40 36H64V64H40Z" fill="#f7f9f8" /><path d="M44 41H60L46 60H62" stroke={G} strokeWidth="4.500" />
          </Ic>
          <BigText><Label t="Mode" w={61} /></BigText>
          <Caret mt={12} />
        </BigButton>
        <ElevationCol>
          <HeightInput><UnitBox><Label t="m" w={20} s={22} c="#c8c8c8" /><Drop ml={14} c="#c0c0c0" /></UnitBox></HeightInput>
          <SurfaceRow>
            <SurfaceBox><Label t="No surfaces" w={124} s={22.5} c="#b6b6b6" /></SurfaceBox>
            <Ic w={32} ml={20}>
              <path d="M14 1V30M0 15H30" stroke="#b0b0b0" strokeWidth="2" /><Node x={14} y={15} c="#b0b0b0" /><path d="M18 18H31V31H18Z" fill="#f7f9f8" /><path d="M20 20H28L21 29H29" stroke="#b0b0b0" strokeWidth="2.600" />
            </Ic>
          </SurfaceRow>
        </ElevationCol>
      </Group>

      <Group w={134} pl={17} name="Corrections" nw={111}>
        <BigButton $w={98}>
          <Ic w={64}><GroundShape /></Ic>
          <BigText>
            <Label t="Ground" w={79} />
            <TextLine><Label t="To Grid" w={75} /><Caret ml={7} /></TextLine>
          </BigText>
        </BigButton>
      </Group>

      <Group w={130} pl={10} name="Data Revi..." nw={105}>
        <BigButton $w={108}>
          <Ic w={64}><circle cx="32" cy="32" r="28" fill="#67ab67" /><path d="M14 32L26 44L48 18" stroke="#fff" strokeWidth="8" /></Ic>
          <BigText><Label t="Manage" w={87} /><Label t="Quality" w={76} /></BigText>
        </BigButton>
      </Group>
      <CollapseArea><Caret dir="up" w={20} h={11} c="#2c2c2c" sw={3} /></CollapseArea>
    </RibbonBar>
  );
}

/* ---------- work area ---------- */

const WorkArea = styled.main`
  height: 1520px;
  flex: none;
  display: flex;
  background: #ebebeb;
`;
const StatusEdge = styled.div`
  flex: 1;
  border-top: 2px solid #bcbcbc;
  background: #efefef;
`;

/* contents pane */

const Pane = styled.aside<{ $w: number; $h: number }>`
  margin: 12px 0 0 12px;
  width: ${(p) => p.$w}px;
  height: ${(p) => p.$h}px;
  flex: none;
  background: #f7f9f8;
  border: 2px solid #d1d3d6;
  border-radius: 7px 7px 0 0;
`;
const PaneHead = styled.div`
  height: 66px;
  display: flex;
  align-items: center;
  padding: 0 0 6px 12px;
  color: #1a1a1a;
  > span { padding-top: 4px; }
`;
const SearchRow = styled.div`
  display: flex;
  align-items: center;
  height: 48px;
  padding-left: 7px;
`;
const SearchField = styled.div`
  margin-left: 16px;
  width: 440px;
  height: 48px;
  border: 2px solid #8e8e8e;
  background: #fff;
  display: flex;
  align-items: center;
  padding-left: 11px;
  > span { padding-top: 2px; }
`;
const ModeRow = styled.div`
  height: 85px;
  display: flex;
  padding-left: 29px;
`;
const ModeTab = styled.div<{ $on?: boolean; $w?: number; $plain?: boolean }>`
  width: ${(p) => p.$w ?? 64}px;
  height: 85px;
  display: flex;
  justify-content: center;
  padding-top: 20px;
  ${(p) => !p.$plain && css`border-bottom: ${p.$on ? "6px solid #007ac2" : "2px solid #c9cbca"};`}
`;
const Heading = styled.div`
  height: 72px;
  padding: 25px 0 0 30px;
`;
const TreeRow = styled.div<{ $h: number; $mt?: number; $pl: number }>`
  height: ${(p) => p.$h}px;
  margin-top: ${(p) => p.$mt ?? 0}px;
  padding-left: ${(p) => p.$pl}px;
  display: flex;
  align-items: center;
  span { padding-top: 2px; }
`;
const TreeSelection = styled.div`
  margin-left: 6px;
  width: 448px;
  height: 48px;
  background: #c6dbee;
  border: 1px solid #007ac2;
  display: flex;
  align-items: center;
  padding-left: 2px;
`;
const CheckBox = styled.div<{ $ml?: number }>`
  margin-left: ${(p) => p.$ml ?? 0}px;
  width: 28px;
  height: 28px;
  flex: none;
  border: 2px solid #949494;
  border-radius: 4px;
  background: #fff;
  display: flex;
  align-items: center;
  justify-content: center;
`;
const Swatch = styled.div<{ $c: string; $line?: string }>`
  width: 40px;
  height: 32px;
  flex: none;
  background: ${(p) => p.$c};
  border: 2px solid ${(p) => p.$line ?? "#000"};
`;
const Tick = () => <Ic w={20}><path d="M2 9L8 15L19 5" stroke="#4a4a4a" strokeWidth="4.500" /></Ic>;

function Contents() {
  const sw = (t: string, w: number, c: string, line?: string, mt = 0, ml = 13) => (
    <TreeRow key={t + c} $h={38} $pl={56} $mt={mt}><Swatch $c={c} $line={line} /><Label t={t} w={w} ml={ml} lh={34} /></TreeRow>
  );
  return (
    <Pane $w={499} $h={1497}>
      <PaneHead>
        <Label t="Contents" w={126} s={31} lh={34} />
        <Caret ml={254} w={16} h={9} /><Pin ml={20} /><Cross ml={19} />
      </PaneHead>
      <SearchRow>
        <Ic w={26} h={32}><path d="M1 1H25V4L16 14V31H10V14L1 4Z" fill="#fff" stroke={G} strokeWidth="2" /><path d="M3 5H23L15 13V30H11V13Z" fill="#b5b5b5" /></Ic>
        <SearchField>
          <Label t="Search" w={68} s={23.5} i c="#5a5a5a" /><Lens ml={282} /><Caret ml={24} w={16} h={9} c="#6a6a6a" />
        </SearchField>
      </SearchRow>
      <ModeRow>
        <ModeTab $on>
          <Ic w={44}><path d="M9 12V34H30M9 19H30" stroke={G} strokeWidth="2" /><path d="M3 0H15L18 9H0ZM0 10H18V14H0Z" fill="#e6d050" /><path d="M29 15H41L44 24H26ZM29 29H41L44 38H26Z" fill="#e6d050" /></Ic>
        </ModeTab>
        <ModeTab>
          <Ic w={42}><path d="M1 8V34Q4 40 20 40T40 34V8" fill="#f2f2f2" /><path d="M27 10L40 8V34Q36 39 27 40Z" fill="#dcdcdc" /><ellipse cx="20.500" cy="8" rx="19.500" ry="6" fill="#f7f7f7" stroke={G} strokeWidth="1.800" /><path d="M1 8V34Q4 40 20.500 40T40 34V8" stroke={G} strokeWidth="1.800" /></Ic>
        </ModeTab>
        <ModeTab $w={64}><Ic w={40} mt={2}><MapPiece /></Ic></ModeTab>
        <ModeTab $w={64}><Ic w={40} mt={2}><Pencil x={2} y={39} len={52} w={8} /></Ic></ModeTab>
        <ModeTab $w={66}><Ic w={46} vb="0 0 64 64"><SnapShape /></Ic></ModeTab>
        <ModeTab $w={54}>
          <Ic w={44} ml={8}><path d="M2 22L24 1L43 18L20 41H2Z" fill="#f0e2a0" stroke="#b5834e" strokeWidth="2" /><circle cx="11" cy="31" r="4.500" fill="#fff" stroke="#b5834e" strokeWidth="2" /><path d="M14 21L26 10M19 25L31 14M24 28L34 19" stroke="#dba98a" strokeWidth="2" /><path d="M11 32Q8 44 1 41" stroke={G} strokeWidth="2" /></Ic>
        </ModeTab>
        <ModeTab $plain $w={79}><Ic w={30} h={6} mt={28}><path d="M0 0H6V6H0ZM12 0H18V6H12ZM24 0H30V6H24Z" fill="#3c3c3c" /></Ic></ModeTab>
      </ModeRow>
      <Heading><Label t="Drawing Order" w={186} s={26.5} b={600} lh={36} /></Heading>
      <TreeRow $h={47} $pl={4}><Corner /><MapThumb ml={9} /><Label t="PopulationGIS" w={147} ml={11} /></TreeRow>
      <TreeRow $h={48} $pl={26}>
        <Corner />
        <TreeSelection><CheckBox><Tick /></CheckBox><Label t="MOT_UrbanoRural_Dissolve" w={290} ml={11} lh={32} /></TreeSelection>
      </TreeRow>
      <TreeRow $h={40} $pl={55}><Label t="SUELO" w={69} b={600} /></TreeRow>
      {sw("Rural", 52, "#1e9e77", undefined, 2)}
      {sw("Urbano", 76, "#d95f02")}
      {sw("<all other values>", 188, "#f7f9f8", undefined, 8, 15)}
      <TreeRow $h={48} $pl={26} $mt={7}><Corner /><CheckBox $ml={9} /><Label t="MOT" w={50} ml={11} /></TreeRow>
      <TreeRow $h={40} $pl={55}><Label t="SUELO" w={69} b={600} /></TreeRow>
      {sw("EXPANSION", 123, "#ecfdba", G, 2)}
      {sw("PROTECCION", 137, "#c0b0ff", G)}
      {sw("RURAL", 68, "#ffb7b7", G)}
      {sw("SUBURBANO", 136, "#c4edff", G)}
      {sw("URBANO", 93, "#fbd0fb", G)}
      {sw("<all other values>", 188, "#828282", G, 8, 15)}
      <TreeRow $h={48} $pl={48} $mt={7}><CheckBox><Tick /></CheckBox><Label t="Topographic" w={130} ml={11} /></TreeRow>
    </Pane>
  );
}

/* ---------- map ---------- */

const CenterColumn = styled.div`
  margin-left: 12px;
  width: 1766px;
  flex: none;
  display: flex;
  flex-direction: column;
`;
const ViewTabs = styled.div`
  height: 60px;
  display: flex;
  align-items: flex-end;
  border-bottom: 4px solid #007ac2;
  color: #1c1c1c;
`;
const ViewTab = styled.div<{ $w: number; $ml: number; $on?: boolean }>`
  width: ${(p) => p.$w}px;
  margin-left: ${(p) => p.$ml}px;
  height: 44px;
  display: flex;
  align-items: center;
  padding: 4px 0 0 12px;
  border-radius: 6px 6px 0 0;
  background: ${(p) => (p.$on ? "#007acf" : "transparent")};
  color: ${(p) => (p.$on ? "#fff" : "inherit")};
  > span { padding-top: 2px; }
`;
const TabsEnd = styled.div`
  flex: 1;
  height: 44px;
  display: flex;
  justify-content: flex-end;
  align-items: center;
  padding: 0 10px 0 0;
`;
const MapFrame = styled.div`
  height: 1009px;
  border: 2px solid #d1d3d6;
  background: #f7f9f8;
`;
const MapView = styled.div`
  position: relative;
  width: 1762px;
  height: 957px;
  overflow: hidden;
`;

type P = [number, number];

function densify(pts: P[], step: number): P[] {
  const out: P[] = [pts[0]];
  for (let k = 1; k < pts.length; k++) {
    const [ax, ay] = pts[k - 1];
    const [bx, by] = pts[k];
    const n = Math.max(1, Math.round(Math.hypot(bx - ax, by - ay) / step));
    for (let j = 1; j <= n; j++) out.push([ax + ((bx - ax) * j) / n, ay + ((by - ay) * j) / n]);
  }
  return out;
}
const Marks = ({ pts, s = 11, c = "#008000", eye = 1 }: { pts: P[]; s?: number; c?: string; eye?: number }) => (
  <g>
    {pts.map(([x, y], k) => (
      <g key={k}>
        <rect x={Math.round(x - s / 2)} y={Math.round(y - s / 2)} width={s} height={s} fill={c} />
        <path d={`M${Math.round(x - s / 2)} ${Math.round(y + s / 2)}h${s}v${-s}`} stroke={c === "red" ? "#900" : "#006000"} strokeWidth="0.800" />
        {k % eye === 0 && <rect x={Math.round(x) - 2} y={Math.round(y) - 2} width="4" height="4" fill={c === "red" ? "#300" : "#022b02"} />}
        {k % eye === 0 && <rect x={Math.round(x) - 1} y={Math.round(y) - 1} width="1.500" height="1.500" fill="#cfe8cf" />}
      </g>
    ))}
  </g>
);

const urbLeft: P[] = [[1919, 372], [1918, 402], [1920, 428], [1923, 448], [1925, 461]];
const urbLeftDense: P[] = [[1930, 476], [1932, 486], [1934, 496], [1936, 508], [1940, 517], [1944, 525], [1955, 525]];
const urbBottom: P[] = [[1979, 536], [1988, 541], [1997, 541], [2021, 551], [2054, 566]];
const urbRightDense: P[] = [[2067, 571], [2070, 560], [2074, 551], [2077, 541], [2081, 531], [2100, 535], [2127, 539], [2157, 545], [2182, 550], [2195, 553], [2205, 554], [2209, 540], [2215, 524], [2219, 513], [2220, 505], [2224, 490], [2228, 476]];
const urbRight: P[] = [[2232, 467], [2238, 459], [2242, 451], [2246, 444], [2252, 432], [2276, 393], [2280, 386], [2287, 373]];
const urbAll: P[] = [...urbLeft, ...urbLeftDense, ...urbBottom, ...urbRightDense, ...urbRight];

const holeTop: P[] = [[1686, 1300], [1681, 1193], [1684, 1185], [1688, 1165], [1686, 1139], [1732, 1143], [1772, 1137], [1823, 1128], [1851, 1117], [1874, 1101], [1898, 1086], [1918, 1080], [1934, 1079], [1961, 1082], [1973, 1089]];
const holeDash: P[] = [[1988, 1092], [2022, 1101], [2056, 1108], [2082, 1114]];
const holeRight: P[] = [[2093, 1118], [2097, 1133], [2108, 1160], [2120, 1180], [2136, 1200], [2143, 1223], [2146, 1254], [2150, 1290], [2158, 1328]];
const holeLeftEnd: P[] = [[1686, 1300], [1698, 1328]];
const holeAll: P[] = [[1698, 1328], ...holeTop, ...holeDash, ...holeRight];
const strayMarks: P[] = [
  [1307, 676], [1284, 682], ...densify([[1269, 689], [1252, 699], [1250, 706], [1234, 712]], 5), ...densify([[1271, 695], [1248, 710], [1234, 717], [1228, 714], [1234, 708]], 5),
  ...densify([[1219, 722], [1202, 751], [1212, 746], [1220, 732], [1219, 722]], 5), ...densify([[1191, 765], [1186, 771]], 4), [1183, 781],
  [1127, 826], [1115, 841], ...densify([[1096, 862], [1091, 869]], 4), [1086, 877], [1084, 880], ...densify([[1063, 890], [1068, 900]], 4),
  ...densify([[1036, 892], [1018, 903]], 5),
];
const poly = (p: P[]) => p.map((q) => q.join(",")).join(" ");

function MapDrawing() {
  return (
    <Svg $w={1762} $h={957} viewBox="525 367 1762 957" fill="none">
      <defs>
        <filter id="soft" x="-20%" y="-20%" width="140%" height="140%"><feGaussianBlur stdDeviation="8" /></filter>
        <filter id="faint" x="-20%" y="-20%" width="140%" height="140%"><feGaussianBlur stdDeviation="1.500" /></filter>
        <filter id="haze" x="-20%" y="-20%" width="140%" height="140%"><feGaussianBlur stdDeviation="3.500" /></filter>
        <filter id="relief" x="0" y="0" width="100%" height="100%">
          <feTurbulence type="fractalNoise" baseFrequency="0.008 0.006" numOctaves="3" seed="7" />
          <feColorMatrix values="0 0 0 0 0.080  0 0 0 0 0.480  0 0 0 0 0.350  1.600 0 0 0 -0.720" />
        </filter>
        <filter id="grain" x="0" y="0" width="100%" height="100%">
          <feTurbulence type="fractalNoise" baseFrequency="0.028 0.010" numOctaves="3" seed="4" />
          <feColorMatrix values="0 0 0 0 0.660  0 0 0 0 0.640  0 0 0 0 0.600  2.400 0 0 0 -1.050" />
        </filter>
        <clipPath id="hole"><polygon points={poly(holeAll)} /></clipPath>
      </defs>
      <rect x="525" y="367" width="1762" height="957" fill="#32a784" />
      <rect x="525" y="367" width="1762" height="957" filter="url(#relief)" opacity="0.320" />
      <g filter="url(#haze)" stroke="#259471" strokeOpacity="0.170" strokeWidth="6">
        <path d="M525 500Q600 430 680 445Q760 440 790 370M700 450Q720 520 700 580Q780 600 800 580M525 700Q570 600 680 590M800 575Q880 600 890 720M770 590Q750 680 770 720M900 680Q980 700 1050 720Q1040 640 1080 600M1050 720Q1060 780 1080 860M1400 640Q1440 560 1420 420M1340 680Q1400 620 1420 560M525 1080Q640 1000 760 1040T960 1130T1200 1050T1400 1130T1640 1080" />
        <path d="M620 1324Q700 1200 640 1080M900 1130Q960 1230 930 1324M1300 900Q1420 940 1440 1060M1500 420Q1560 520 1540 660T1600 900M1720 840Q1800 850 1900 800M2000 560Q2020 640 2000 720M2100 600Q2180 660 2287 640M2060 860Q2090 960 2060 1060M2180 900Q2230 1000 2210 1120T2260 1300" />
      </g>
      <g filter="url(#soft)" fill="#1f8e6c" opacity="0.160">
        <ellipse cx="1040" cy="410" rx="16" ry="50" /><ellipse cx="1145" cy="385" rx="60" ry="26" /><ellipse cx="1180" cy="460" rx="20" ry="32" /><ellipse cx="1720" cy="790" rx="24" ry="70" />
        <ellipse cx="1770" cy="900" rx="30" ry="34" /><ellipse cx="1900" cy="870" rx="24" ry="40" /><ellipse cx="1760" cy="1080" rx="24" ry="110" /><ellipse cx="590" cy="640" rx="24" ry="36" /><ellipse cx="2080" cy="720" rx="16" ry="60" />
      </g>
      <g filter="url(#faint)" stroke="#279b7a">
        <path d="M1949 560L1950 600Q1952 630 1960 660Q1968 700 1966 760V1090" strokeWidth="17" />
        <path d="M1972 796Q1985 774 2022 773Q2060 777 2110 790Q2180 800 2228 826Q2262 845 2287 847" strokeWidth="14" />
        <path d="M1965 772V800" stroke="#32a784" strokeWidth="5" />
      </g>
      <g filter="url(#faint)" fill="#1f8f6d" fillOpacity="0.700" fontFamily="Liberation Serif, serif" fontSize="65">
        <text x="1747" y="548" textLength="224" lengthAdjust="spacingAndGlyphs">Portach</text>
        <g fillOpacity="0.520">
          <text x="729" y="773" textLength="184" lengthAdjust="spacingAndGlyphs">Sector</text>
          <text x="727" y="842" textLength="275" lengthAdjust="spacingAndGlyphs">El Puyoa</text>
          <text x="1252" y="1347" textLength="184" lengthAdjust="spacingAndGlyphs">Sector</text>
        </g>
      </g>
      <text x="1314" y="845" textLength="70" fontSize="25" fill="#1f8b6a" fontFamily="Open Sans, sans-serif">Rural</text>

      <polygon points={poly([...urbAll, [2287, 360], [1919, 360]])} fill="#d95f02" />
      <polyline points={poly(urbAll)} stroke="#3fd0c0" strokeWidth="6" />
      <polyline points={poly(urbAll)} stroke="#000" strokeWidth="2.600" />
      <polyline points={poly(urbAll)} stroke="#fff" strokeWidth="1.400" strokeDasharray="5 4" />
      <Marks pts={urbLeft} /><Marks pts={densify(urbLeftDense, 4)} eye={5} /><Marks pts={urbBottom} /><Marks pts={densify(urbRightDense, 5)} eye={3} /><Marks pts={urbRight} />
      <text x="2038" y="461" textLength="101" fontSize="27" fill="#111" stroke="#fff" strokeWidth="5" strokeLinejoin="round" paintOrder="stroke" fontFamily="Open Sans, sans-serif">Urbano</text>

      <g clipPath="url(#hole)">
        <rect x="1660" y="1060" width="520" height="270" fill="#f3f2f0" />
        <g filter="url(#soft)">
          <path d="M1700 1150Q1720 1210 1700 1324H1745Q1755 1200 1765 1150Z" fill="#dedad4" /><path d="M1808 1140Q1775 1230 1740 1324H1812Q1800 1240 1822 1150Z" fill="#bab5ab" />
          <path d="M1850 1130Q1880 1230 1850 1324H1880Q1900 1200 1890 1110Z" fill="#e6e3df" /><ellipse cx="1845" cy="1240" rx="20" ry="44" fill="#fbfaf8" /><ellipse cx="1885" cy="1200" rx="18" ry="34" fill="#faf8fb" />
          <ellipse cx="1915" cy="1290" rx="14" ry="50" fill="#e4e1dc" /><ellipse cx="2040" cy="1240" rx="50" ry="70" fill="#f8f7f5" />
        </g>
        <rect x="1660" y="1060" width="520" height="270" filter="url(#grain)" opacity="0.450" />
        <g filter="url(#faint)">
          <path d="M2036 1112Q2036 1180 2027 1240T2018 1324" stroke="#e0dcd9" strokeWidth="7" />
          <path d="M1975 1155H2065Q2090 1160 2096 1185" stroke="#dedcd9" strokeWidth="5" />
          <path d="M1966 1060V1330" stroke="#dedede" strokeWidth="24" /><path d="M1967 1060V1330" stroke="#9d9d9d" strokeWidth="15" />
        </g>
      </g>
      <polyline points={poly([[1973, 1089], ...holeDash, [2093, 1118]])} stroke="#3ff0f5" strokeWidth="6" transform="translate(0 2)" />
      <polyline points={poly([[1973, 1089], ...holeDash, [2093, 1118]])} stroke="#000" strokeWidth="3" />
      <polyline points={poly([[1973, 1089], ...holeDash, [2093, 1118]])} stroke="#fff" strokeWidth="1.400" strokeDasharray="4 4" />
      <Marks pts={densify(holeTop, 5)} eye={6} /><Marks pts={holeDash} /><Marks pts={densify(holeRight, 5)} eye={6} /><Marks pts={densify(holeLeftEnd, 5)} eye={6} />
      <Marks pts={strayMarks} s={12} eye={3} /><Marks pts={[[1069, 903]]} c="red" />
    </Svg>
  );
}

const EditPalette = styled.div`
  position: absolute;
  left: 547px;
  top: 829px;
  width: 668px;
  height: 104px;
  background: #f7f9f8;
  border: 4px solid #c9c9c9;
  border-radius: 5px;
  display: flex;
  align-items: center;
`;
const PalettePart = styled.div<{ $w: number; $pl: number }>`
  width: ${(p) => p.$w}px;
  height: 96px;
  display: flex;
  align-items: center;
  padding-left: ${(p) => p.$pl}px;
  & + & { border-left: 5px solid #c9c9c9; }
`;
const PaletteOn = styled.div`
  margin-left: 12px;
  width: 73px;
  height: 72px;
  border: 2px solid #007ac2;
  border-radius: 4px;
  background: #c6dbee;
  padding: 2px 0 0 2px;
`;
const PaletteGear = styled.div`
  position: absolute;
  left: 1199px;
  top: 909px;
`;
const NotesBadge = styled.div`
  position: absolute;
  left: 1706px;
  top: 905px;
`;

const Arrow = ({ x = 0, y = 0 }: any) => (
  <path transform={`translate(${x} ${y})`} d="M1 2L36 30H12L1 48Z" fill="#fff" stroke="#5a5a5a" strokeWidth="2.200" />
);
const BoxNodes = () => (
  <g>
    <path d="M4 4H52V30M4 4V49H18M4 49H52V36" stroke={G} strokeWidth="2.200" />
    <Node x={4} y={4} s={7} /><Node x={52} y={4} s={7} /><Node x={4} y={49} s={7} /><Node x={52} y={49} s={7} />
  </g>
);

function Palette() {
  return (
    <>
      <EditPalette>
        <PalettePart $w={376} $pl={24}>
          <Ic w={64}><path d="M25 42Q20 31 12 36Q2 37 1 27Q2 20 6 13Q11 -1 23 1Q36 3 36 22" stroke={G} strokeWidth="1.600" /><Arrow x={26} y={14} /></Ic>
          <Drop ml={18} w={14} h={8} />
          <Ic w={52} h={64} ml={30}><Arrow x={1} y={14} /><path d="M37 1V26M25 13.500H50" stroke={G} strokeWidth="4" /></Ic>
          <PaletteOn><Ic w={60} h={64}><Arrow x={11} y={14} /><path d="M35 13.500H58" stroke={G} strokeWidth="4" /></Ic></PaletteOn>
          <Ic w={64} ml={8}><path d="M4 58H56" stroke="#54935a" strokeWidth="3" /><Node x={4} y={58} s={7} /><Node x={58} y={58} s={7} /><Pencil x={15} y={50} len={66} w={8} /></Ic>
        </PalettePart>
        <PalettePart $w={106} $pl={21}>
          <Ic w={64}>
            <path d="M2 16V2H36V14M38 26H60V60H50" stroke="#9a9a9a" strokeWidth="2.500" strokeDasharray="4 3" />
            <path d="M3 18H28V34H46V60H3Z" fill="#dff0dc" stroke="#67ab67" strokeWidth="2.500" />
            {[[3, 18], [28, 18], [28, 34], [46, 34], [3, 60], [46, 60]].map(([x, y]) => <Node key={`${x}-${y}`} x={x} y={y} c="#54935a" s={7} f="#a9cda9" />)}
            <path d="M51 12L60 3" stroke="#4a4a4a" strokeWidth="3.500" /><path d="M52 0H62V10Z" fill="#4a4a4a" />
          </Ic>
        </PalettePart>
        <PalettePart $w={178} $pl={24}>
          <Ic w={58} h={56}><BoxNodes /><path d="M18 38L30 50L56 24" stroke="#f7f9f8" strokeWidth="11" /><path d="M20 40L30 50L56 26" stroke="#67ab67" strokeWidth="6" /></Ic>
          <Ic w={58} h={56} ml={19}><BoxNodes /><path d="M20 26H46V54H20Z" fill="#f7f9f8" /><path d="M23 29L43 53M43 29L23 53" stroke="#5a5a5a" strokeWidth="5.500" /></Ic>
        </PalettePart>
      </EditPalette>
      <PaletteGear>
        <Ic w={32}><circle cx="16" cy="16" r="15" fill="#fff" stroke={G} strokeWidth="2" /><g transform="translate(4.500 4.500) scale(.72)"><GearShape c="#3c3c3c" f="#3c3c3c" r={11} /></g></Ic>
      </PaletteGear>
      <NotesBadge>
        <Ic w={42} h={38}><path d="M2 36V6H6V1H16V6H40V36H35V32H30V36H25V32H20V36H15V32H9V36Z" fill="#fff" stroke={G} strokeWidth="2.500" /><path d="M9 15H34M9 24H34" stroke={G} strokeWidth="2.500" /></Ic>
      </NotesBadge>
    </>
  );
}

const StatusBar = styled.div`
  height: 48px;
  display: flex;
  align-items: center;
  padding: 0 0 0 10px;
`;
const ScaleBox = styled.div`
  width: 200px;
  height: 44px;
  background: #fff;
  border: 2px solid #8e8e8e;
  display: flex;
  align-items: center;
  padding-left: 12px;
  color: #1c1c1c;
  > span { padding-top: 3px; }
`;
const VLine = styled.i<{ $ml: number; $h?: number }>`
  width: 2px;
  height: ${(p) => p.$h ?? 30}px;
  margin-left: ${(p) => p.$ml}px;
  background: #a3a3a3;
  flex: none;
`;
const SnapOn = styled.div`
  margin-left: 8px;
  width: 41px;
  height: 40px;
  border: 2px solid #005e95;
  background: #9bcbeb;
  padding: 1px 0 0 3px;
`;
const SelectedBox = styled.div`
  margin-left: 8px;
  width: 265px;
  height: 40px;
  background: #fff;
  display: flex;
  align-items: center;
  padding-left: 7px;
  > span { padding-top: 1px; }
`;
const Coordinates = styled.div`
  margin-left: 248px;
  padding-top: 4px;
`;

function MapStatus() {
  return (
    <StatusBar>
      <ScaleBox><Label t="1:25,117" w={86} lh={34} /><Drop ml={79} /></ScaleBox>
      <VLine $ml={8} />
      <SnapOn>
        <Ic w={34}><path d="M1 1H22V12H1M11 1V22H1V0" stroke="#7c8c98" strokeWidth="2.200" /><path d="M23 15V33M14 24H32" stroke="#b9def5" strokeWidth="5" /><path d="M23 16V32M15 24H31" stroke="#3c4a55" strokeWidth="2.200" /></Ic>
      </SnapOn>
      <Ic w={26} ml={5}><path d="M1 1H25V25H1ZM7 1V25M13 1V25M19 1V25M1 7H25M1 13H25M1 19H25" stroke="#9a9a9a" strokeWidth="1.800" /></Ic>
      <Ic w={32} ml={12}>
        <path d="M3 28L28 14V28Z" fill="#cfe6f6" /><path d="M3 28H32" stroke={BL} strokeWidth="3" /><path d="M6 17L18 7M6 10V18H13M12 6H19V12" stroke={BL} strokeWidth="2" />
        <rect x="1" y="3" width="8" height="5" stroke={G} strokeWidth="2" /><rect x="23" y="17" width="8" height="6" stroke={G} strokeWidth="2" fill="#fff" /><path d="M26 0V10M21 5H31" stroke={G} strokeWidth="2" /><rect x="1" y="26" width="5" height="5" fill="#54935a" /><path d="M10 24H18M18 17H20" stroke={G} strokeWidth="2" strokeDasharray="2 2" />
      </Ic>
      <Ic w={32} ml={8}><rect x="0" y="0" width="15" height="15" fill="#dcefdb" /><path d="M16 0V32M0 16H32" stroke="#5a5a5a" strokeWidth="2.200" strokeDasharray="3 2" /><rect x="13" y="13" width="6" height="6" fill={G} /></Ic>
      <Ic w={32} ml={8} vb="0 0 64 64"><g><path d="M1 42V19H6L14 32V19H20V42H15L7 29V42Z" fill={BL} /><path d="M28 0V63L62 28" stroke={G} strokeWidth="4" /><path d="M36 6Q48 10 48 24M38 18L48 28L58 18" stroke={BL} strokeWidth="5" /></g></Ic>
      <Caret ml={13} w={16} h={10} c="#2c2c2c" sw={3} />
      <VLine $ml={17} />
      <Coordinates><Label t="74.0224427°W 4.9950499°N" w={294} s={22.5} lh={36} /></Coordinates>
      <Caret ml={22} w={20} h={11} mt={4} c="#4a4a4a" sw={3.600} />
      <VLine $ml={247} />
      <SelectedBox><ZoomMap /><Label t="Selected Features: 1" w={210} ml={9} lh={28} /></SelectedBox>
      <VLine $ml={8} />
      <Ic w={26} ml={17}><MapPiece x={1} y={1} s={0.6} blue={false} /></Ic>
      <VLine $ml={18} />
      <Ic w={22} h={28} ml={15}><path d="M0 0H8V28H0ZM14 0H22V28H14Z" fill="#666" /></Ic>
      <VLine $ml={18} />
      <Refresh ml={12} />
    </StatusBar>
  );
}

/* ---------- attribute table ---------- */

const TableTabs = styled.div`
  height: 56px;
  display: flex;
  align-items: flex-end;
  padding-top: 12px;
`;
const TableTab = styled.div`
  width: 398px;
  height: 44px;
  border-radius: 8px 8px 0 0;
  background: #d2d3d8;
  display: flex;
  align-items: center;
  padding: 4px 0 0 12px;
  > span { padding-top: 3px; }
`;
const TablePane = styled.div`
  height: 384px;
  border: 2px solid #d1d3d8;
  border-top-width: 6px;
  background: #f7f9f8;
  padding: 2px;
  display: flex;
  flex-direction: column;
`;
const FieldBar = styled.div`
  height: 60px;
  flex: none;
  border: 2px solid #bdbec3;
  background: #eeeff1;
  display: flex;
  align-items: center;
  padding-left: 11px;
  > span { padding-top: 3px; }
`;
const GridBox = styled.div`
  margin-top: 2px;
  height: 258px;
  flex: none;
  border: 2px solid #c4c5c8;
  background: #fff;
  display: flex;
`;
const GridMain = styled.div`
  width: 1713px;
  height: 254px;
  display: flex;
  flex-direction: column;
`;
const GridRows = styled.div`
  height: 213px;
  overflow: hidden;
`;
const GridRow = styled.div<{ $h: number }>`
  display: flex;
  height: ${(p) => p.$h}px;
`;
const Cell = styled.div<{ $w: number; $bg?: string; $head?: boolean; $mark?: boolean; $under?: boolean; $pl?: number; $open?: boolean }>`
  width: ${(p) => p.$w}px;
  flex: none;
  background: ${(p) => p.$bg ?? "#fff"};
  padding: ${(p) => (p.$under ? 6 : 3)}px 0 0 ${(p) => p.$pl ?? 11}px;
  display: flex;
  align-items: center;
  border-right: ${(p) => (p.$mark ? "6px solid #007ac2" : `2px solid ${p.$open ? "transparent" : "#cfcfcf"}`)};
  border-bottom: ${(p) => (p.$under ? "5px solid #007ac2" : "2px solid #c9c9c9")};
`;
const HScroll = styled.div`
  height: 41px;
  background: #f4f4f4;
  display: flex;
  align-items: center;
  justify-content: space-between;
  padding: 0 16px;
`;
const VScroll = styled.div<{ $w: number }>`
  width: ${(p) => p.$w}px;
  background: #ebebeb;
  display: flex;
  flex-direction: column;
  align-items: center;
`;
const Thumb = styled.div<{ $w: number; $h: number; $mt: number }>`
  width: ${(p) => p.$w}px;
  height: ${(p) => p.$h}px;
  margin-top: ${(p) => p.$mt}px;
  border-radius: 11px;
  background: #b3b3b3;
`;
const TableFoot = styled.div`
  height: 54px;
  display: flex;
  align-items: center;
  > span { padding-top: 6px; }
`;
const ShowAll = styled.div`
  width: 64px;
  height: 45px;
  border: 2px solid #42b4ee;
  background: #c3c4ca;
  display: flex;
  align-items: center;
  justify-content: center;
`;
const FilterOff = styled.div`
  margin-left: 10px;
  width: 84px;
  height: 48px;
  background: #eeeff2;
  display: flex;
  align-items: center;
  padding-left: 8px;
  gap: 12px;
`;
const Slider = styled.div`
  margin-left: 16px;
  width: 200px;
  height: 24px;
  display: flex;
  align-items: center;
`;
const SliderPart = styled.i<{ $w: number; $h: number; $c: string }>`
  width: ${(p) => p.$w}px;
  height: ${(p) => p.$h}px;
  background: ${(p) => p.$c};
`;
const ZoomBox = styled.div`
  margin-left: 14px;
  width: 120px;
  height: 44px;
  background: #fff;
  color: #1c1c1c;
  display: flex;
  align-items: center;
  padding: 5px 0 0 14px;
`;

const SEL = "#c7e1f4";

function AttributeTable() {
  return (
    <>
      <TableTabs>
        <TableTab>
          <GridTable /><Label t="MOT_UrbanoRural_Dissolve" w={290} ml={13} /><Cross ml={19} s={19} c="#5a5a5a" />
        </TableTab>
        <TabsEnd><Caret w={16} h={9} c="#5a5a5a" mt={2} /></TabsEnd>
      </TableTabs>
      <TablePane>
        <FieldBar>
          <Label t="Field:" w={60} b={700} s={22} lh={32} />
          <GridTable ml={16} o={0.4}><path d="M9 18V30M3 24H15" stroke={G} strokeWidth="4" /></GridTable>
          <Label t="Add" w={41} ml={9} c="#bdbdbd" lh={32} />
          <GridTable ml={21}><rect x="9" y="10" width="6" height="17" fill="#c9bfe6" /><path d="M11 18H24V32H11Z" fill="#fff" /><path d="M13 23H22M13 29H22" stroke={G} strokeWidth="3" /></GridTable>
          <Label t="Calculate" w={96} ml={9} lh={32} />
          <VLine $ml={20} $h={44} />
          <Label t="Selection:" w={111} b={700} s={22} ml={14} lh={32} />
          <Ic w={32} ml={16}>
            <path d="M1 1H19V11H12V20H3Q1 20 1 18Z" fill="#b3ebfa" stroke={G} strokeWidth="2" /><path d="M7 1Q11 9 18 3L18 10H13Q8 8 7 1Z" fill="#fff" stroke={G} strokeWidth="1.500" />
            <rect x="13" y="13" width="18" height="18" fill="#fff" stroke={G} strokeWidth="2" /><rect x="13" y="13" width="18" height="4" fill="#57a6da" /><path d="M13 22H31M13 26.500H31M19 18V31M25 18V31" stroke={G} strokeWidth="1.800" />
          </Ic>
          <Label t="Select By Attributes" w={207} ml={7} lh={32} />
          <Ic w={32} ml={20}>
            <Sheet x={12} y={0} w={20} h={18} /><circle cx="10" cy="16" r="8.500" fill="#eef7fd" stroke={BL} strokeWidth="2.600" /><path d="M10 11V21M5 16H15" stroke="#4a4a4a" strokeWidth="2" /><path d="M15.500 23L22 31" stroke="#b5834e" strokeWidth="4" />
          </Ic>
          <Label t="Zoom To" w={95} ml={6} lh={32} />
          <Ic w={32} ml={20}><Sheet x={0} y={0} w={20} h={14} rows={3} blue={[2]} /><Sheet x={12} y={18} w={20} h={14} rows={3} blue={[1, 2]} /><path d="M23 3Q28 5 28 13M24 10L28 14L32 10M9 30Q4 28 4 20M0 23L4 19L8 23" stroke={G} strokeWidth="2" /></Ic>
          <Label t="Switch" w={67} ml={7} lh={32} />
          <Ic w={30} h={32} ml={21}><Sheet x={0} y={3} w={30} h={26} /></Ic>
          <Label t="Clear" w={54} ml={8} lh={32} />
          <Ic w={30} h={32} ml={20}><Sheet x={0} y={3} w={30} h={26} blue={[2, 3]} /><path d="M3 20L16 33M16 20L3 33" stroke="#fff" strokeWidth="7" /><path d="M4 21L15 32M15 21L4 32" stroke="#cc5a3c" strokeWidth="4" /></Ic>
          <Label t="Delete" w={70} ml={8} lh={32} />
          <Ic w={32} ml={20}><Sheet x={7} y={0} w={25} h={20} rows={3} blue={[0]} /><Sheet x={0} y={12} w={26} h={20} rows={3} blue={[0, 2]} /></Ic>
          <Label t="Copy" w={55} ml={6} lh={32} />
          <Ic w={28} h={26} ml={347}><path d="M2 3H26M2 13H26M2 23H26" stroke="#555" strokeWidth="5.500" strokeLinecap="round" /></Ic>
        </FieldBar>
        <GridBox>
          <GridMain>
            <GridRows>
              <GridRow $h={57}>
                <Cell $w={39} $pl={8} $open><Ic w={23} h={23} mt={18}><path d="M23 0V23H0Z" fill="#c6c6c6" /></Ic></Cell>
                <Cell $w={62} $bg="#ebebeb"><Label t="FID" w={41} b={700} s={24} /></Cell>
                <Cell $w={116} $bg="#ebebeb"><Label t="Shape *" w={94} b={700} s={24} /></Cell>
                <Cell $w={324} $bg={SEL} $under><Label t="SUELO" w={80} b={700} s={24} /></Cell>
              </GridRow>
              <GridRow $h={58}>
                <Cell $w={39} $bg="#ebebeb"><Label t="1" s={24} /></Cell>
                <Cell $w={62}><Label t="0" s={25} /></Cell><Cell $w={116}><Label t="Polygon" w={94} s={25} /></Cell><Cell $w={324}><Label t="Urbano" w={86} s={25} /></Cell>
              </GridRow>
              <GridRow $h={57}>
                <Cell $w={39} $bg={SEL} $mark><Label t="2" s={24} /></Cell>
                <Cell $w={62} $bg="#8bffff"><Label t="2" s={25} /></Cell><Cell $w={116} $bg="#8bffff"><Label t="Polygon" w={94} s={25} /></Cell><Cell $w={324} $bg={SEL}><Label t="Rural" w={58} s={25} /></Cell>
              </GridRow>
              <GridRow $h={58}>
                <Cell $w={39} $bg="#ebebeb" /><Cell $w={502}><Label t="Click to add new row." w={250} s={25} /></Cell>
              </GridRow>
            </GridRows>
            <HScroll><Caret dir="left" w={10} h={16} c="#c4c4c4" sw={2} /><Caret dir="right" w={10} h={16} c="#c4c4c4" sw={2} /></HScroll>
          </GridMain>
          <VScroll $w={41}><Caret dir="up" w={16} h={9} mt={16} /><Thumb $w={22} $h={113} $mt={21} /><Caret w={16} h={9} mt={29} /></VScroll>
        </GridBox>
        <TableFoot>
          <ShowAll><Ic w={30} h={26}><Sheet x={0} y={0} w={30} h={26} blue={[1, 3]} /></Ic></ShowAll>
          <Ic w={30} h={26} ml={20}><Sheet x={0} y={1} w={30} h={20} rows={3} blue={[0, 1, 2]} /></Ic>
          <Ic w={18} h={18} ml={36}><path d="M1 0V18" stroke="#555" strokeWidth="2" /><path d="M18 0V18L4 9Z" fill="#555" /></Ic>
          <Ic w={18} h={18} ml={28}><path d="M17 0V18" stroke="#aaa" strokeWidth="2" /><path d="M0 0V18L14 9Z" fill="#b4b4b4" /></Ic>
          <Label t="1 of 2 selected" w={154} ml={28} lh={32} />
          <Label t="Filters:" w={66} ml={633} lh={32} />
          <FilterOff>
            <Ic w={30}><circle cx="15" cy="15" r="14" stroke="#d3d6d9" strokeWidth="2" /><circle cx="15" cy="15" r="11" fill="#dbe9e4" /><path d="M15 6V17H22" stroke="#c3cdd6" strokeWidth="2.500" /></Ic>
            <Ic w={30}><circle cx="16" cy="16" r="13" stroke="#d3d6d9" strokeWidth="2" /><circle cx="16" cy="16" r="10" fill="#dbe9e4" /><path d="M3 0V14M9 0V14M15 0V14M0 9H6M6 4H12M12 9H18" stroke="#c3d5e2" strokeWidth="2" /></Ic>
          </FilterOff>
          <Ic w={32} ml={8}><path d="M1 2H25V5L16 14V30H11V14L1 5Z" fill="#b5b5b5" stroke={G} strokeWidth="2" /><rect x="15" y="15" width="17" height="17" fill="#f7f9f8" /><rect x="17" y="17" width="13" height="13" stroke={BL} strokeWidth="4" strokeDasharray="4 2.500" /></Ic>
          <VLine $ml={4} />
          <Ic w={16} h={30} ml={15}><path d="M8 15V3M1 10L8 2L15 10" stroke="#a9cdb0" strokeWidth="4" /><path d="M8 15V27M1 20L8 28L15 20" stroke="#f3cf9e" strokeWidth="4" /></Ic>
          <Ic w={12} h={4} ml={31}><path d="M0 2H12" stroke="#555" strokeWidth="4" /></Ic>
          <Slider><SliderPart $w={106} $h={6} $c="#6e6e6e" /><SliderPart $w={6} $h={22} $c="#6e6e6e" /><SliderPart $w={88} $h={6} $c="#dcdcdc" /></Slider>
          <Ic w={16} ml={14}><path d="M0 8H16M8 0V16" stroke="#555" strokeWidth="3.500" /></Ic>
          <ZoomBox><Label t="120 %" w={64} s={22} /><Drop ml={22} mt={-4} /></ZoomBox>
          <VLine $ml={10} />
          <Refresh ml={13} />
        </TableFoot>
      </TablePane>
    </>
  );
}

/* ---------- modify features pane ---------- */

const RightColumn = styled.div`
  width: 772px;
  flex: none;
`;
const ToolHead = styled.div`
  height: 40px;
  display: flex;
  align-items: center;
  margin-top: -2px;
  padding-left: 12px;
`;
const SelectionHead = styled.div`
  height: 104px;
  display: flex;
  align-items: center;
  padding: 14px 0 0 33px;
  > span { padding-top: 4px; }
`;
const FeatureList = styled.div`
  margin-left: 10px;
  width: 736px;
  height: 260px;
  border: 2px solid #dddfde;
  background: #fbfbfb;
  padding-top: 6px;
`;
const FeatureRow = styled.div<{ $pl: number }>`
  height: 35px;
  display: flex;
  align-items: center;
  padding-left: ${(p) => p.$pl}px;
`;
const ActiveTool = styled.div`
  margin: 10px 0 0 10px;
  width: 736px;
  height: 68px;
  border: 2px solid #007ac2;
  background: ${SEL};
  display: flex;
  align-items: center;
  padding-left: 16px;
  > span { padding-top: 3px; }
`;
const Splitter = styled.div`
  margin-top: 361px;
  height: 23px;
  background: #ebebeb;
`;
const VertexBar = styled.div`
  height: 52px;
  display: flex;
  align-items: center;
  padding-left: 20px;
`;
const VertexGrid = styled.div`
  height: 472px;
  display: flex;
  overflow: hidden;
`;
const VertexMain = styled.div`
  width: 722px;
`;
const VertexHead = styled.div`
  height: 32px;
  background: #ebebeb;
  display: flex;
  padding-left: 2px;
`;
const PartRow = styled.div`
  height: 48px;
  background: #fff;
  display: flex;
  align-items: center;
  > span { padding-top: 3px; }
`;
const VertexRow = styled.div<{ $alt: boolean }>`
  height: 48px;
  display: flex;
  background: ${(p) => (p.$alt ? "#ebebeb" : "#fff")};
  border-bottom: 2px solid #dcdcdc;
`;
const VertexCell = styled.div<{ $w: number; $pl?: number }>`
  width: ${(p) => p.$w}px;
  padding: 4px 0 0 ${(p) => p.$pl ?? 0}px;
  border-right: 2px solid #dcdcdc;
  display: flex;
  align-items: center;
`;
const VertexSide = styled.div`
  width: 34px;
  background: #fff;
  padding-top: 32px;
`;
const PaneTabs = styled.div`
  display: flex;
  margin: -3px 0 0 12px;
  height: 43px;
`;
const PaneTab = styled.div<{ $ml: number; $w: number; $on?: boolean }>`
  margin-left: ${(p) => p.$ml}px;
  width: ${(p) => p.$w}px;
  height: 42px;
  padding-top: 5px;
  ${(p) => p.$on && css`
    padding-left: 10px;
    color: #007ac2;
    background: #f7f9f8;
    border: 2px solid #d1d3d8;
    border-top: 0;
    border-radius: 0 0 7px 7px;
  `}
`;

const vertices: [string, string][] = [
  ["74.0136397°W", "5.1058601°N"], ["74.0135965°W", "5.1058146°N"], ["74.0135907°W", "5.1058085°N"], ["74.0135876°W", "5.1058069°N"],
  ["74.0136397°W", "5.1058601°N"], ["74.0134607°W", "5.1057536°N"], ["74.0133935°W", "5.1057136°N"], ["74.0132709°W", "5.1056406°N"],
];

function ModifyFeatures() {
  return (
    <RightColumn>
      <Pane $w={760} $h={1458}>
        <PaneHead>
          <Label t="Modify Features" w={228} s={31} lh={34} />
          <Label t="?" s={25} b={600} w={12} ml={380} lh={26} /><Caret ml={21} w={14} h={8} /><Pin ml={22} /><Cross ml={20} />
        </PaneHead>
        <ToolHead>
          <Ic w={36}><circle cx="18" cy="18" r="17" stroke={G} strokeWidth="2" /><path d="M28 18H10M18 9L9 18L18 27" stroke={G} strokeWidth="3.500" /></Ic>
          <Ic w={34} h={34} ml={231} vb="0 0 57 57"><VerticesShape /></Ic>
          <Label t="Edit Vertices" w={160} s={28} ml={8} lh={38} />
        </ToolHead>
        <SelectionHead>
          <Ic w={44} h={50} mt={-6}><MapPiece x={13} y={2} s={0.77} /><path d="M0 19V54L8 46L14 60L19 58L14 43H25Z" transform="scale(1 .86) translate(0 5)" fill={G} stroke="#f7f9f8" strokeWidth="1.500" /></Ic>
          <Label t="Change the selection." w={230} ml={16} />
          <Caret ml={399} w={16} h={9} c="#2c2c2c" sw={3} />
        </SelectionHead>
        <FeatureList>
          <FeatureRow $pl={13}><Ic w={12} h={13} mt={-8}><path d="M11 1V12H1Z" fill="#6a6a6a" stroke="#1c1c1c" strokeWidth="2" /></Ic><Label t="MOT_UrbanoRural_Dissolve (1)" w={326} ml={18} /></FeatureRow>
          <FeatureRow $pl={81}><Label t="Rural" w={53} /></FeatureRow>
        </FeatureList>
        <ActiveTool>
          <Ic w={48} h={46} vb="0 0 58 54"><VerticesShape /></Ic>
          <Label t="Edit Vertices" w={128} ml={17} />
        </ActiveTool>
        <Splitter />
        <VertexBar>
          <Ic w={20}><path d="M2 2L18 18M18 2L2 18" stroke="#dd9c87" strokeWidth="5" /></Ic>
          <VLine $ml={20} $h={52} />
          <Ic w={32} h={30} ml={13}><path d="M3 4H24V18M3 4V26H12" stroke={G} strokeWidth="2.200" /><Node x={3} y={4} /><Node x={24} y={4} /><Node x={3} y={26} /><path d="M16 21L21 27L31 16" stroke="#67ab67" strokeWidth="3.500" /></Ic>
          <CopyIcon ml={608} />
        </VertexBar>
        <VertexGrid>
          <VertexMain>
            <VertexHead><Corner ml={1} mt={8} /><Label t="#" ml={24} w={14} s={22} lh={35} /><Label t="Longitude (dd)" w={156} ml={31} s={22.5} lh={35} /><Label t="Latitude (dd)" w={135} ml={163} s={22.5} lh={35} /></VertexHead>
            <PartRow><Drop w={15} h={11} /><Label t="Part: 1" w={63} ml={11} s={22.5} lh={32} /></PartRow>
            {vertices.map(([lon, lat], k) => (
              <VertexRow key={k} $alt={k % 2 === 0}>
                <VertexCell $w={40} />
                <VertexCell $w={44} $pl={7}><Label t={String(k + 1)} s={22.5} /></VertexCell>
                <VertexCell $w={319} $pl={8}><Label t={lon} w={152} s={22.5} /></VertexCell>
                <VertexCell $w={319} $pl={8}><Label t={lat} w={134} s={22.5} /></VertexCell>
              </VertexRow>
            ))}
            <VertexRow $alt><VertexCell $w={40} /><VertexCell $w={44} /><VertexCell $w={319} /><VertexCell $w={319} /></VertexRow>
          </VertexMain>
          <VertexSide>
            <VScroll $w={34}><Caret dir="up" w={14} h={8} mt={14} /><Thumb $w={18} $h={42} $mt={16} /><Caret w={14} h={8} mt={339} /><Ic w={10} h={20} /></VScroll>
          </VertexSide>
        </VertexGrid>
      </Pane>
      <PaneTabs>
        <PaneTab $ml={12} $w={82}><Label t="Catalog" w={80} s={22.5} lh={34} /></PaneTab>
        <PaneTab $ml={12} $w={137} $on><Label t="Modify..." w={92} s={22.5} lh={34} /></PaneTab>
        <PaneTab $ml={14} $w={100}><Label t="Label Cl..." w={100} s={22.5} lh={34} /></PaneTab>
        <PaneTab $ml={25} $w={97}><Label t="Geopro..." w={97} s={22.5} lh={34} /></PaneTab>
        <PaneTab $ml={34} $w={101}><Label t="Chart Pr..." w={101} s={22.5} lh={34} /></PaneTab>
        <PaneTab $ml={30} $w={97}><Label t="Symbol..." w={97} s={22.5} lh={34} /></PaneTab>
      </PaneTabs>
    </RightColumn>
  );
}

export default function App() {
  return (
    <Window>
      <Global />
      <Title />
      <Tabs />
      <Ribbon />
      <WorkArea>
        <Contents />
        <CenterColumn>
          <ViewTabs>
            <ViewTab $ml={0} $w={206}><MapThumb /><Label t="POTLayer" w={98} ml={11} /></ViewTab>
            <ViewTab $ml={0} $w={224}><MapThumb /><Label t="CountyLimit" w={129} ml={10} /></ViewTab>
            <ViewTab $ml={12} $w={256} $on><MapThumb /><Label t="PopulationGIS" w={148} ml={11} /><Cross ml={19} s={19} c="#d9ecf8" /></ViewTab>
            <TabsEnd><Caret w={16} h={9} c="#6a6a6a" /></TabsEnd>
          </ViewTabs>
          <MapFrame>
            <MapView>
              <MapDrawing />
              <Palette />
            </MapView>
            <MapStatus />
          </MapFrame>
          <AttributeTable />
        </CenterColumn>
        <ModifyFeatures />
      </WorkArea>
      <StatusEdge />
    </Window>
  );
}
